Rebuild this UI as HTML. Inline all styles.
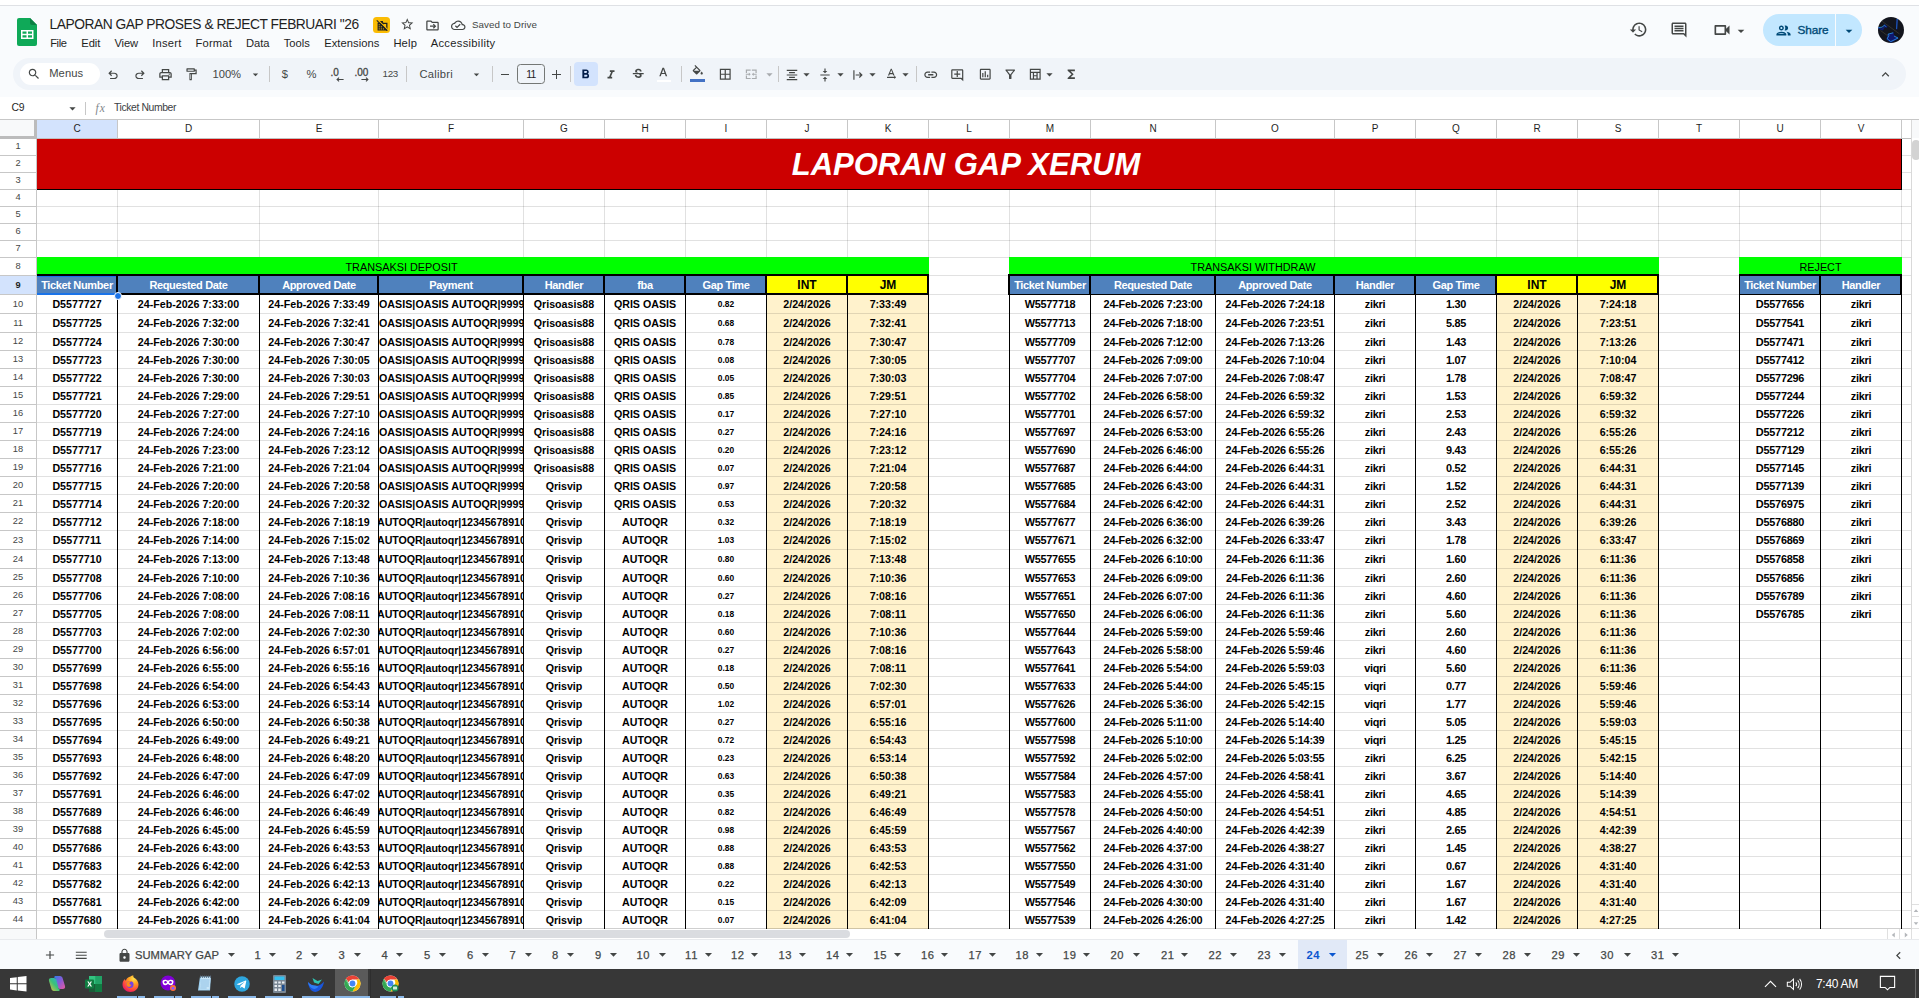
<!DOCTYPE html>
<html lang="id"><head><meta charset="utf-8"><title>LAPORAN GAP PROSES &amp; REJECT FEBRUARI "26 - Google Sheets</title>
<style>
*{box-sizing:border-box;margin:0;padding:0}
html,body{width:1919px;height:998px;overflow:hidden;background:#fff;font-family:"Liberation Sans",sans-serif}
body{position:relative}
i,b,s,u{position:absolute;display:block;font-style:normal;font-weight:normal;text-decoration:none}
#grid b{text-align:center;white-space:nowrap;overflow:hidden;color:#000}
#grid b.a{font-weight:bold;font-size:10.67px}
#grid b.k{font-weight:bold;font-size:10.9px;letter-spacing:-.25px}
#grid b.s{font-weight:bold;font-size:8.4px}
#grid b.p{font-weight:bold;font-size:10.67px;text-align:left;text-indent:0;letter-spacing:.04px}
#grid b.q{font-weight:bold;font-size:10.67px;text-align:left;text-indent:-2px;letter-spacing:-.06px}
#grid b.hd{font-weight:bold;font-size:11px;color:#fff;letter-spacing:-.35px}
#grid b.hy{font-weight:bold;font-size:12px}
#grid b.gb{font-size:10.85px}
#grid b.ttl{font-weight:bold;font-style:italic;font-size:31px;color:#fff}
#grid b.ch{font-size:10px;color:#1f1f1f;height:18px;line-height:18px}
#grid b.rn{left:0;width:36px;font-size:9.3px;color:#444746}
#grid b.rs{color:#1f1f1f;font-weight:bold}
.t{position:absolute;white-space:nowrap;color:#1f1f1f;transform-origin:0 50%}
svg{position:absolute;overflow:visible}
</style></head><body>
<div id="chrome">
<i style="left:0px;top:0px;width:1919px;height:5px;background:#fff;"></i>
<i style="left:0px;top:5px;width:1919px;height:1px;background:#dfe1e5;"></i>
<i style="left:0px;top:6px;width:1919px;height:91px;background:#f9fbfd;"></i>
<svg viewBox="0 0 20 28" style="left:17px;top:18px;width:20px;height:28px"><path d="M2 0h11l7 7v19a2 2 0 0 1-2 2H2a2 2 0 0 1-2-2V2a2 2 0 0 1 2-2z" fill="#0fa958"/><path d="M13 0l7 7h-5a2 2 0 0 1-2-2z" fill="#0b8043"/><path d="M4 12h12.500v9H4zm1.500 1.500v2.200h4v-2.200zm5.500 0v2.200h4v-2.200zm-5.500 3.700v2.300h4v-2.300zm5.500 0v2.300h4v-2.300z" fill="#fff" fill-rule="evenodd"/></svg>
<i style="left:373px;top:17px;width:17px;height:16px;background:#fbbc04;border-radius:3.5px"></i>
<svg viewBox="0 0 24 24" style="left:375.500px;top:18.800px;width:12.500px;height:12.500px"><path d="M3 7h5V4h5l1 3h8v15H3z" fill="#202124"/><path d="M13.500 9.500h6v10z" fill="#fbbc04"/><g fill="#fbbc04"><rect x="5.200" y="10" width="2" height="2"/><rect x="5.200" y="14" width="2" height="2"/><rect x="5.200" y="18" width="2" height="2"/><rect x="9.200" y="14" width="2" height="2"/><rect x="9.200" y="18" width="2" height="2"/><rect x="13.200" y="18" width="2" height="2"/><rect x="16.500" y="12" width="1.500" height="1.500"/></g><path d="M3.500 1.500l19.500 19.500" stroke="#fbbc04" stroke-width="2.200"/><path d="M1.500 2.500l20 20" stroke="#202124" stroke-width="2"/></svg>
<svg viewBox="0 0 24 24" style="left:400.1px;top:17.4px;width:14.5px;height:14.5px;fill:#444746;"><path d="M22 9.24l-7.19-.62L12 2 9.19 8.63 2 9.24l5.46 4.73L5.82 21 12 17.27 18.18 21l-1.63-7.03L22 9.24zM12 15.4l-3.76 2.27 1-4.28-3.32-2.88 4.38-.38L12 6.1l1.71 4.04 4.38.38-3.32 2.88 1 4.28L12 15.4z"/></svg>
<svg viewBox="0 0 24 24" style="left:425.0px;top:17.5px;width:15px;height:15px;fill:#444746;"><path d="M20 6h-8l-2-2H4c-1.100 0-2 .900-2 2v12c0 1.100.900 2 2 2h16c1.100 0 2-.900 2-2V8c0-1.100-.900-2-2-2zm0 12H4V6h5.170l2 2H20v10zM8 12h6.200l-1.600-1.600L14 9l4 4-4 4-1.400-1.400 1.600-1.600H8z"/></svg>
<svg viewBox="0 0 24 24" style="left:451.2px;top:17.8px;width:14.5px;height:14.5px;fill:#444746;"><path d="M19.35 10.04C18.67 6.59 15.64 4 12 4 9.11 4 6.6 5.64 5.35 8.04 2.34 8.36 0 10.91 0 14c0 3.31 2.69 6 6 6h13c2.76 0 5-2.24 5-5 0-2.64-2.05-4.78-4.65-4.96zM19 18H6c-2.21 0-4-1.79-4-4 0-2.05 1.53-3.76 3.56-3.97l1.07-.11.5-.95C8.08 7.14 9.94 6 12 6c2.62 0 4.88 1.86 5.39 4.43l.3 1.5 1.53.11c1.56.1 2.78 1.41 2.78 2.96 0 1.65-1.35 3-3 3zm-9-3.82l-2.09-2.09L6.5 13.5 10 17l6.01-6.01-1.41-1.41z"/></svg>
<svg viewBox="0 0 24 24" style="left:1628.5px;top:20.0px;width:19px;height:19px;fill:#444746;"><path d="M13 3c-4.97 0-9 4.03-9 9H1l3.89 3.89.07.14L9 12H6c0-3.87 3.13-7 7-7s7 3.13 7 7-3.13 7-7 7c-1.93 0-3.68-.79-4.94-2.06l-1.42 1.42C8.27 19.99 10.51 21 13 21c4.97 0 9-4.03 9-9s-4.03-9-9-9zm-1 5v5l4.28 2.54.72-1.21-3.5-2.08V8H12z"/></svg>
<svg viewBox="0 0 24 24" style="left:1669.5px;top:21.0px;width:18px;height:18px;fill:#444746;"><path d="M20 2H4c-1.1 0-2 .9-2 2v12c0 1.1.9 2 2 2h14l4 4V4c0-1.1-.9-2-2-2zm0 15.17L18.83 16H4V4h16v13.17zM6 6h12v2H6zm0 3h12v2H6zm0 3h12v2H6z"/></svg>
<svg viewBox="0 0 24 24" style="left:1712.0px;top:20.0px;width:20px;height:20px;fill:#444746;"><path d="M15 8v8H5V8h10m1-2H4c-.55 0-1 .45-1 1v10c0 .55.45 1 1 1h12c.55 0 1-.45 1-1v-3.5l4 4v-11l-4 4V7c0-.55-.45-1-1-1z"/></svg>
<svg viewBox="0 0 24 24" style="left:1733.0px;top:22.5px;width:16px;height:16px;fill:#444746;"><path d="M7 10l5 5 5-5z"/></svg>
<i style="left:1763px;top:14px;width:99px;height:32px;background:#c2e7ff;border-radius:16px"></i>
<i style="left:1835px;top:14px;width:1px;height:32px;background:#f9fbfd;"></i>
<svg viewBox="0 0 24 24" style="left:1775.0px;top:21.5px;width:17px;height:17px;fill:#004a77;"><path d="M9 13.75c-2.34 0-7 1.17-7 3.5V19h14v-1.75c0-2.33-4.66-3.5-7-3.5zM4.34 17c.84-.58 2.87-1.25 4.66-1.25s3.82.67 4.66 1.25H4.34zM9 12c1.93 0 3.5-1.57 3.5-3.5S10.930 5 9 5 5.5 6.570 5.500 8.500 7.070 12 9 12zm0-5c.83 0 1.5.67 1.500 1.500S9.830 10 9 10s-1.500-.67-1.500-1.500S8.170 7 9 7zm7.040 6.810c1.160.84 1.960 1.960 1.960 3.440V19h4v-1.750c0-2.020-3.500-3.170-5.960-3.440zM15 12c1.930 0 3.500-1.570 3.500-3.500S16.930 5 15 5c-.540 0-1.040.130-1.500.350.630.890 1 1.980 1 3.150s-.370 2.260-1 3.150c.460.220.960.350 1.500.350z"/></svg>
<svg viewBox="0 0 24 24" style="left:1840.7px;top:22.5px;width:16px;height:16px;fill:#004a77;"><path d="M7 10l5 5 5-5z"/></svg>
<svg viewBox="0 0 26 26" style="left:1878px;top:17px;width:26px;height:26px"><defs><clipPath id="av"><circle cx="13" cy="13" r="13"/></clipPath><filter id="bl" x="-50%" y="-50%" width="200%" height="200%"><feGaussianBlur stdDeviation=".7"/></filter></defs><g clip-path="url(#av)"><rect width="26" height="26" fill="#13151d"/><path d="M9.500 17.500l6-2.200 1 4 4.500 2-8 4.500-4.500-3z" fill="#0a1ab0" opacity=".55" filter="url(#bl)"/><path d="M0 11l4.500 1.500L7 8.500l2 2" fill="none" stroke="#0a22b8" stroke-width="1.800" opacity=".5" filter="url(#bl)"/><path d="M19.200 1.500l-.7 11" stroke="#0a2ac0" stroke-width="1.600" opacity=".5" filter="url(#bl)"/><path d="M4 4.200l17.600 12.800M2.500 13.500l7.500 5.500" stroke="#4a4638" stroke-width=".6"/><path d="M.2 10.600l3.800-.4 2.400-2 1.600 1.600" fill="none" stroke="#2f9bf0" stroke-width=".8"/><path d="M19.200 2l-.6 10" stroke="#2a7be0" stroke-width=".7"/><path d="M15.200 15.800l-5.200 1.400.8 1.400-1.600 3.200 3.600 2.800 7.200-3.600-4-2" fill="none" stroke="#2f9bf0" stroke-width=".8"/></g></svg>
<i style="left:13px;top:58px;width:1893px;height:32px;background:#f0f4f9;border-radius:16px"></i>
<i style="left:20px;top:63px;width:80px;height:22px;background:#fff;border-radius:11px"></i>
<svg viewBox="0 0 24 24" style="left:26.5px;top:67.0px;width:14px;height:14px;fill:#444746;"><path d="M15.5 14h-.79l-.28-.27C15.41 12.59 16 11.11 16 9.5 16 5.91 13.09 3 9.5 3S3 5.91 3 9.5 5.91 16 9.5 16c1.61 0 3.09-.59 4.23-1.57l.27.28v.79l5 4.99L20.49 19l-4.99-5zm-6 0C7.01 14 5 11.99 5 9.5S7.01 5 9.5 5 14 7.01 14 9.5 11.99 14 9.5 14z"/></svg>
<svg viewBox="0 0 24 24" style="left:106.0px;top:67.5px;width:14px;height:14px;fill:#444746;"><path d="M7 19v-2h7.100q1.575 0 2.738-1T18 13.500q0-1.500-1.162-2.500T14.100 10H7.800l2.600 2.600L9 14 4 9l5-5 1.400 1.400L7.800 8h6.300q2.425 0 4.163 1.575T20 13.500q0 2.350-1.737 3.925T14.100 19z"/></svg>
<svg viewBox="0 0 24 24" style="left:133.0px;top:67.5px;width:14px;height:14px;fill:#444746;"><path d="M9.900 19q-2.425 0-4.163-1.575T4 13.500q0-2.350 1.737-3.925T9.900 8h6.300l-2.600-2.600L15 4l5 5-5 5-1.400-1.400 2.600-2.600H9.900q-1.575 0-2.737 1T6 13.500Q6 15 7.163 16T9.900 17H17v2z"/></svg>
<svg viewBox="0 0 24 24" style="left:157.5px;top:67.0px;width:15px;height:15px;fill:#444746;"><path d="M19 8h-1V3H6v5H5c-1.66 0-3 1.34-3 3v6h4v4h12v-4h4v-6c0-1.66-1.34-3-3-3zM8 5h8v3H8V5zm8 12v2H8v-4h8v2zm2-2v-2H6v2H4v-4c0-.55.45-1 1-1h14c.55 0 1 .45 1 1v4h-2z M18 11.5m-1 0a1 1 0 1 0 2 0a1 1 0 1 0 -2 0"/></svg>
<svg viewBox="0 0 24 24" style="left:183.8px;top:67.2px;width:14.5px;height:14.5px;fill:#444746;"><path d="M18 4V3c0-.55-.45-1-1-1H5c-.55 0-1 .45-1 1v4c0 .55.45 1 1 1h12c.55 0 1-.45 1-1V6h1v4H9v11c0 .55.45 1 1 1h2c.55 0 1-.45 1-1v-9h8V4h-3zm-2 2H6V4h10v2zm-5 14h-1v-8h1v8z"/></svg>
<svg viewBox="0 0 24 24" style="left:248.5px;top:68.0px;width:13px;height:13px;fill:#444746;"><path d="M7 10l5 5 5-5z"/></svg>
<i style="left:269px;top:66px;width:1px;height:16px;background:#c7c7c7;"></i>
<svg viewBox="0 0 10 6" style="left:335.5px;top:76.500px;width:8px;height:5px;fill:none;stroke:#444746;stroke-width:1.300"><path d="M9.500 3H1.500M3.800 .6L1.300 3l2.500 2.400"/></svg>
<svg viewBox="0 0 10 6" style="left:361px;top:76.500px;width:8px;height:5px;fill:none;stroke:#444746;stroke-width:1.300"><path d="M.5 3h8M6.200 .6L8.700 3 6.200 5.400"/></svg>
<i style="left:406px;top:66px;width:1px;height:16px;background:#c7c7c7;"></i>
<svg viewBox="0 0 24 24" style="left:469.5px;top:68.0px;width:13px;height:13px;fill:#444746;"><path d="M7 10l5 5 5-5z"/></svg>
<i style="left:492px;top:66px;width:1px;height:16px;background:#c7c7c7;"></i>
<i style="left:500.5px;top:74px;width:8px;height:1px;background:#444746;"></i>
<i style="left:517px;top:64px;width:27.5px;height:20px;background:transparent;border:1px solid #747775;border-radius:3.500px"></i>
<i style="left:552px;top:74px;width:9px;height:1px;background:#444746;"></i>
<i style="left:556px;top:70px;width:1px;height:9px;background:#444746;"></i>
<i style="left:570px;top:66px;width:1px;height:16px;background:#c7c7c7;"></i>
<i style="left:573.5px;top:62px;width:24px;height:24px;background:#d3e3fd;border-radius:4px"></i>
<svg viewBox="0 0 24 24" style="left:577.8px;top:67.0px;width:15px;height:15px;fill:#041e49;"><path d="M15.6 10.79c.97-.67 1.65-1.77 1.65-2.79 0-2.26-1.75-4-4-4H7v14h7.04c2.09 0 3.71-1.7 3.71-3.79 0-1.52-.86-2.82-2.15-3.42zM10 6.5h3c.83 0 1.5.67 1.5 1.5s-.67 1.5-1.5 1.5h-3v-3zm3.5 9H10v-3h3.5c.83 0 1.5.67 1.5 1.5s-.67 1.5-1.5 1.5z"/></svg>
<svg viewBox="0 0 24 24" style="left:604.0px;top:67.5px;width:14px;height:14px;fill:#444746;"><path d="M10 4v3h2.21l-3.42 8H6v3h8v-3h-2.21l3.42-8H18V4z"/></svg>
<svg viewBox="0 0 24 24" style="left:630.8px;top:67.2px;width:14.5px;height:14.5px;fill:#444746;"><path d="M7.24 8.75c-.26-.48-.39-1.03-.39-1.67 0-.61.13-1.16.4-1.67.26-.5.63-.93 1.11-1.29.48-.35 1.05-.63 1.7-.83.66-.19 1.39-.29 2.18-.29.81 0 1.54.11 2.21.34.66.22 1.23.54 1.69.94.47.4.83.88 1.08 1.43.25.55.38 1.15.38 1.81h-3.01c0-.31-.05-.59-.15-.85-.09-.27-.24-.49-.44-.68-.2-.19-.45-.33-.75-.44-.3-.1-.66-.16-1.06-.16-.39 0-.74.04-1.03.13-.29.09-.53.21-.72.36-.19.16-.34.34-.44.55-.1.21-.15.43-.15.66 0 .48.25.88.74 1.21.38.25.77.48 1.41.7H7.39c-.05-.08-.11-.17-.15-.25zM21 12v-2H3v2h9.62c.18.07.4.14.55.2.37.17.66.34.87.51.21.17.35.36.43.57.07.2.11.43.11.69 0 .23-.05.45-.14.66-.09.2-.23.38-.42.53-.19.15-.42.26-.71.35-.29.08-.63.13-1.01.13-.43 0-.83-.04-1.18-.13s-.66-.23-.91-.42c-.25-.19-.45-.44-.59-.75-.14-.31-.25-.76-.25-1.21H6.4c0 .55.08 1.13.24 1.58.16.45.37.85.65 1.21.28.35.6.66.98.92.37.26.78.48 1.22.65.44.17.9.3 1.38.39.48.08.96.13 1.44.13.8 0 1.53-.09 2.18-.28s1.21-.45 1.67-.79c.46-.34.82-.77 1.07-1.27s.38-1.07.38-1.71c0-.6-.1-1.14-.31-1.61-.05-.11-.11-.23-.17-.33H21z"/></svg>
<svg viewBox="0 0 24 24" style="left:656.2px;top:65.8px;width:14.5px;height:14.5px;fill:#444746;"><path d="M5.490 17h2.420l1.270-3.580h5.650L16.090 17h2.420L13.250 3h-2.500L5.490 17zm4.420-5.610L12 5.480l2.090 5.910H9.910z"/></svg>
<i style="left:656.5px;top:79.5px;width:14px;height:2.5px;background:#fff;"></i>
<i style="left:681px;top:66px;width:1px;height:16px;background:#c7c7c7;"></i>
<svg viewBox="0 0 24 24" style="left:690.8px;top:64.8px;width:13.5px;height:13.5px;fill:#444746;"><path d="M16.56 8.94L7.62 0 6.21 1.41l2.38 2.38-5.15 5.15c-.59.59-.59 1.54 0 2.12l5.5 5.5c.29.29.68.44 1.06.44s.77-.15 1.06-.44l5.5-5.5c.59-.58.59-1.53 0-2.12zM5.21 10L10 5.21 14.79 10H5.21zM19 11.5s-2 2.17-2 3.5c0 1.1.9 2 2 2s2-.9 2-2c0-1.33-2-3.5-2-3.5z"/></svg>
<i style="left:690px;top:79px;width:15px;height:3px;background:#4472c4;"></i>
<svg viewBox="0 0 24 24" style="left:717.8px;top:67.2px;width:14.5px;height:14.5px;fill:#444746;"><path d="M3 3v18h18V3H3zm8 16H5v-6h6v6zm0-8H5V5h6v6zm8 8h-6v-6h6v6zm0-8h-6V5h6v6z"/></svg>
<svg viewBox="0 0 24 24" style="left:744.2px;top:67.2px;width:14.5px;height:14.5px;fill:#a8abae;"><path d="M5 10H3V4h8v2H5v4zm14 8h-6v2h8v-6h-2v4zM5 18v-4H3v6h8v-2H5zM21 4h-8v2h6v4h2V4zM8 13v2l3-3-3-3v2H3v2h5zm8-2V9l-3 3 3 3v-2h5v-2h-5z"/></svg>
<svg viewBox="0 0 24 24" style="left:761.5px;top:67.0px;width:15px;height:15px;fill:#a8abae;"><path d="M7 10l5 5 5-5z"/></svg>
<i style="left:778px;top:66px;width:1px;height:16px;background:#c7c7c7;"></i>
<svg viewBox="0 0 24 24" style="left:785.0px;top:67.5px;width:14px;height:14px;fill:#444746;"><path d="M7 15v2h10v-2H7zm-4 6h18v-2H3v2zm0-8h18v-2H3v2zm4-6v2h10V7H7zM3 3v2h18V3H3z"/></svg>
<svg viewBox="0 0 24 24" style="left:799.0px;top:67.0px;width:15px;height:15px;fill:#444746;"><path d="M7 10l5 5 5-5z"/></svg>
<svg viewBox="0 0 24 24" style="left:818.0px;top:67.5px;width:14px;height:14px;fill:#444746;"><path d="M8 19h3v4h2v-4h3l-4-4-4 4zm8-14h-3V1h-2v4H8l4 4 4-4zM4 11v2h16v-2H4z"/></svg>
<svg viewBox="0 0 24 24" style="left:832.5px;top:67.0px;width:15px;height:15px;fill:#444746;"><path d="M7 10l5 5 5-5z"/></svg>
<svg viewBox="0 0 24 24" style="left:850.5px;top:67.5px;width:14px;height:14px;fill:#444746;"><path d="M4 4h2v16H4zM8 11h8.200l-2.600-2.600L15 7l5 5-5 5-1.400-1.400 2.600-2.600H8z"/></svg>
<svg viewBox="0 0 24 24" style="left:865.0px;top:67.0px;width:15px;height:15px;fill:#444746;"><path d="M7 10l5 5 5-5z"/></svg>
<svg viewBox="0 0 24 24" style="left:884.2px;top:67.2px;width:14.5px;height:14.5px;fill:#444746;"><path d="M12.750 3h-1.500L6.500 14h2.100l.900-2.200h5l.900 2.200h2.100L12.750 3zm-2.620 7L12 4.980 13.870 10h-3.740zM20 17l-3-3v2H5v2h12v2l3-3z"/></svg>
<svg viewBox="0 0 24 24" style="left:898.0px;top:67.0px;width:15px;height:15px;fill:#444746;"><path d="M7 10l5 5 5-5z"/></svg>
<i style="left:916px;top:66px;width:1px;height:16px;background:#c7c7c7;"></i>
<svg viewBox="0 0 24 24" style="left:923.2px;top:66.8px;width:15.5px;height:15.5px;fill:#444746;"><path d="M3.9 12c0-1.71 1.39-3.1 3.1-3.1h4V7H7c-2.76 0-5 2.24-5 5s2.24 5 5 5h4v-1.9H7c-1.71 0-3.1-1.39-3.1-3.1zM8 13h8v-2H8v2zm9-6h-4v1.9h4c1.71 0 3.1 1.39 3.1 3.1s-1.39 3.1-3.1 3.1h-4V17h4c2.76 0 5-2.24 5-5s-2.24-5-5-5z"/></svg>
<svg viewBox="0 0 24 24" style="left:950.2px;top:67.8px;width:14.5px;height:14.5px;fill:#444746;"><path d="M22 4c0-1.1-.9-2-2-2H4c-1.1 0-2 .9-2 2v12c0 1.1.9 2 2 2h14l4 4V4zm-2 13.17L18.83 16H4V4h16v13.17zM13 5h-2v4H7v2h4v4h2v-4h4V9h-4z"/></svg>
<svg viewBox="0 0 24 24" style="left:977.8px;top:67.2px;width:14.5px;height:14.5px;fill:#444746;"><path d="M9 17H7v-7h2v7zm4 0h-2V7h2v10zm4 0h-2v-4h2v4zm2 2H5V5h14v14zm0-16H5c-1.1 0-2 .9-2 2v14c0 1.1.9 2 2 2h14c1.1 0 2-.9 2-2V5c0-1.1-.9-2-2-2z"/></svg>
<svg viewBox="0 0 24 24" style="left:1003.2px;top:67.2px;width:14.5px;height:14.5px;fill:#444746;"><path d="M7 6h10l-5.01 6.3L7 6zm-2.75-.39C6.27 8.2 10 13 10 13v6c0 .55.45 1 1 1h2c.55 0 1-.45 1-1v-6s3.72-4.8 5.74-7.39A.998.998 0 0 0 18.95 4H5.04c-.83 0-1.3.95-.79 1.61z"/></svg>
<svg viewBox="0 0 24 24" style="left:1027.8px;top:67.2px;width:14.5px;height:14.5px;fill:#444746;"><path d="M3 3v18h18V3H3zm16 2v3H5V5h14zM5 19v-9h3v9H5zm5 0v-3.500h4V19h-4zm0-5.500V10h4v3.500h-4zm6 5.500v-9h3v9h-3z"/></svg>
<svg viewBox="0 0 24 24" style="left:1041.5px;top:67.0px;width:15px;height:15px;fill:#444746;"><path d="M7 10l5 5 5-5z"/></svg>
<svg viewBox="0 0 24 24" style="left:1063.8px;top:67.2px;width:14.5px;height:14.5px;fill:#444746;"><path d="M18 4H6v2l6.5 6L6 18v2h12v-3h-7l5-5-5-5h7z"/></svg>
<svg viewBox="0 0 24 24" style="left:1877.5px;top:67.0px;width:15px;height:15px;fill:#444746;"><path d="M12 8l-6 6 1.41 1.41L12 10.83l4.59 4.58L18 14z"/></svg>
<i style="left:0px;top:97px;width:1919px;height:22px;background:#fff;"></i>
<svg viewBox="0 0 24 24" style="left:64.5px;top:100.5px;width:15px;height:15px;fill:#444746;"><path d="M7 10l5 5 5-5z"/></svg>
<i style="left:85px;top:102px;width:1px;height:13px;background:#c7c7c7;"></i>
<i style="left:0px;top:929px;width:1919px;height:11px;background:#fff;"></i>
<i style="left:0px;top:929px;width:36px;height:10px;background:#f8f9fa;"></i>
<i style="left:36px;top:929px;width:1px;height:10px;background:#c7c7c7;"></i>
<i style="left:0px;top:939px;width:1919px;height:1px;background:#e8eaed;"></i>
<i style="left:104px;top:930px;width:746px;height:8px;background:#dadce0;border-radius:4px"></i>
<i style="left:1887px;top:929px;width:1px;height:10px;background:#e0e0e0;"></i>
<i style="left:1899px;top:929px;width:1px;height:10px;background:#e0e0e0;"></i>
<i style="left:1911px;top:929px;width:1px;height:10px;background:#e0e0e0;"></i>
<svg viewBox="0 0 24 10" style="left:1888px;top:929.500px;width:24px;height:10px;fill:#b4b7bb"><path d="M6.800 2.600v4.800L3.800 5zM16.800 2.600v4.800l3-2.400z"/></svg>
<i style="left:1912px;top:139px;width:7px;height:790px;background:#fff;"></i>
<i style="left:1912px;top:140px;width:8px;height:19.5px;background:#d3d3d3;border-radius:4px"></i>
<i style="left:1911px;top:904px;width:8px;height:1px;background:#e0e0e0;"></i>
<i style="left:1911px;top:916px;width:8px;height:1px;background:#e0e0e0;"></i>
<i style="left:1911px;top:928px;width:8px;height:1px;background:#e0e0e0;"></i>
<svg viewBox="0 0 8 24" style="left:1911.500px;top:904.500px;width:8px;height:24px;fill:#b4b7bb"><path d="M1.700 7h4.600L4 4.200zM1.700 17.200h4.600L4 20z"/></svg>
<i style="left:0px;top:940px;width:1919px;height:29px;background:#f9fbfd;"></i>
<svg viewBox="0 0 24 24" style="left:42.5px;top:948.0px;width:14px;height:14px;fill:#444746;"><path d="M19 13h-6v6h-2v-6H5v-2h6V5h2v6h6v2z"/></svg>
<svg viewBox="0 0 24 24" style="left:74.2px;top:947.8px;width:14.5px;height:14.5px;fill:#444746;"><path d="M3 18h18v-2H3v2zm0-5h18v-2H3v2zm0-7v2h18V6H3z"/></svg>
<svg viewBox="0 0 24 24" style="left:117.2px;top:947.5px;width:15px;height:15px;fill:#444746;"><path d="M18 8h-1V6c0-2.76-2.24-5-5-5S7 3.24 7 6v2H6c-1.1 0-2 .9-2 2v10c0 1.1.9 2 2 2h12c1.1 0 2-.9 2-2V10c0-1.1-.9-2-2-2zm-6 9c-1.1 0-2-.9-2-2s.9-2 2-2 2 .9 2 2-.9 2-2 2zm3.1-9H8.9V6c0-1.71 1.39-3.1 3.1-3.1 1.71 0 3.1 1.39 3.1 3.1v2z"/></svg>
<svg viewBox="0 0 24 24" style="left:222.8px;top:946.0px;width:17px;height:17px;fill:#444746;"><path d="M7 10l5 5 5-5z"/></svg>
<svg viewBox="0 0 24 24" style="left:263.6px;top:946.0px;width:17px;height:17px;fill:#444746;"><path d="M7 10l5 5 5-5z"/></svg>
<svg viewBox="0 0 24 24" style="left:305.6px;top:946.0px;width:17px;height:17px;fill:#444746;"><path d="M7 10l5 5 5-5z"/></svg>
<svg viewBox="0 0 24 24" style="left:348.6px;top:946.0px;width:17px;height:17px;fill:#444746;"><path d="M7 10l5 5 5-5z"/></svg>
<svg viewBox="0 0 24 24" style="left:391.1px;top:946.0px;width:17px;height:17px;fill:#444746;"><path d="M7 10l5 5 5-5z"/></svg>
<svg viewBox="0 0 24 24" style="left:434.1px;top:946.0px;width:17px;height:17px;fill:#444746;"><path d="M7 10l5 5 5-5z"/></svg>
<svg viewBox="0 0 24 24" style="left:476.6px;top:946.0px;width:17px;height:17px;fill:#444746;"><path d="M7 10l5 5 5-5z"/></svg>
<svg viewBox="0 0 24 24" style="left:519.6px;top:946.0px;width:17px;height:17px;fill:#444746;"><path d="M7 10l5 5 5-5z"/></svg>
<svg viewBox="0 0 24 24" style="left:562.1px;top:946.0px;width:17px;height:17px;fill:#444746;"><path d="M7 10l5 5 5-5z"/></svg>
<svg viewBox="0 0 24 24" style="left:604.6px;top:946.0px;width:17px;height:17px;fill:#444746;"><path d="M7 10l5 5 5-5z"/></svg>
<i style="left:1297.5px;top:940px;width:49px;height:29px;background:#e1e9f7;"></i>
<svg viewBox="0 0 24 24" style="left:654.1px;top:946.0px;width:17px;height:17px;fill:#444746;"><path d="M7 10l5 5 5-5z"/></svg>
<svg viewBox="0 0 24 24" style="left:699.6px;top:946.0px;width:17px;height:17px;fill:#444746;"><path d="M7 10l5 5 5-5z"/></svg>
<svg viewBox="0 0 24 24" style="left:746.1px;top:946.0px;width:17px;height:17px;fill:#444746;"><path d="M7 10l5 5 5-5z"/></svg>
<svg viewBox="0 0 24 24" style="left:793.6px;top:946.0px;width:17px;height:17px;fill:#444746;"><path d="M7 10l5 5 5-5z"/></svg>
<svg viewBox="0 0 24 24" style="left:841.1px;top:946.0px;width:17px;height:17px;fill:#444746;"><path d="M7 10l5 5 5-5z"/></svg>
<svg viewBox="0 0 24 24" style="left:888.6px;top:946.0px;width:17px;height:17px;fill:#444746;"><path d="M7 10l5 5 5-5z"/></svg>
<svg viewBox="0 0 24 24" style="left:936.1px;top:946.0px;width:17px;height:17px;fill:#444746;"><path d="M7 10l5 5 5-5z"/></svg>
<svg viewBox="0 0 24 24" style="left:983.6px;top:946.0px;width:17px;height:17px;fill:#444746;"><path d="M7 10l5 5 5-5z"/></svg>
<svg viewBox="0 0 24 24" style="left:1031.1px;top:946.0px;width:17px;height:17px;fill:#444746;"><path d="M7 10l5 5 5-5z"/></svg>
<svg viewBox="0 0 24 24" style="left:1078.1px;top:946.0px;width:17px;height:17px;fill:#444746;"><path d="M7 10l5 5 5-5z"/></svg>
<svg viewBox="0 0 24 24" style="left:1128.1px;top:946.0px;width:17px;height:17px;fill:#444746;"><path d="M7 10l5 5 5-5z"/></svg>
<svg viewBox="0 0 24 24" style="left:1176.1px;top:946.0px;width:17px;height:17px;fill:#444746;"><path d="M7 10l5 5 5-5z"/></svg>
<svg viewBox="0 0 24 24" style="left:1225.1px;top:946.0px;width:17px;height:17px;fill:#444746;"><path d="M7 10l5 5 5-5z"/></svg>
<svg viewBox="0 0 24 24" style="left:1274.1px;top:946.0px;width:17px;height:17px;fill:#444746;"><path d="M7 10l5 5 5-5z"/></svg>
<svg viewBox="0 0 24 24" style="left:1324.1px;top:946.0px;width:17px;height:17px;fill:#0b57d0;"><path d="M7 10l5 5 5-5z"/></svg>
<svg viewBox="0 0 24 24" style="left:1372.1px;top:946.0px;width:17px;height:17px;fill:#444746;"><path d="M7 10l5 5 5-5z"/></svg>
<svg viewBox="0 0 24 24" style="left:1421.1px;top:946.0px;width:17px;height:17px;fill:#444746;"><path d="M7 10l5 5 5-5z"/></svg>
<svg viewBox="0 0 24 24" style="left:1470.1px;top:946.0px;width:17px;height:17px;fill:#444746;"><path d="M7 10l5 5 5-5z"/></svg>
<svg viewBox="0 0 24 24" style="left:1519.1px;top:946.0px;width:17px;height:17px;fill:#444746;"><path d="M7 10l5 5 5-5z"/></svg>
<svg viewBox="0 0 24 24" style="left:1568.1px;top:946.0px;width:17px;height:17px;fill:#444746;"><path d="M7 10l5 5 5-5z"/></svg>
<svg viewBox="0 0 24 24" style="left:1618.6px;top:946.0px;width:17px;height:17px;fill:#444746;"><path d="M7 10l5 5 5-5z"/></svg>
<svg viewBox="0 0 24 24" style="left:1666.6px;top:946.0px;width:17px;height:17px;fill:#444746;"><path d="M7 10l5 5 5-5z"/></svg>
<svg viewBox="0 0 24 24" style="left:1891.0px;top:948.0px;width:15px;height:15px;fill:#444746;"><path d="M15.41 7.41L14 6l-6 6 6 6 1.41-1.41L10.83 12z"/></svg>
<i style="left:0px;top:969px;width:1919px;height:29px;background:#373737;"></i>
<span class="t" style="left:49.5px;top:15.0px;font-size:13.8px;line-height:19px;color:#1f1f1f;letter-spacing:-0.47px;">LAPORAN GAP PROSES &amp; REJECT FEBRUARI &quot;26</span>
<span class="t" style="left:472px;top:17.5px;font-size:9.8px;line-height:14px;color:#444746;letter-spacing:0.05px;">Saved to Drive</span>
<span class="t" style="left:50.2px;top:35.3px;font-size:11.2px;line-height:16px;color:#1f1f1f;letter-spacing:-0.43px;">File</span>
<span class="t" style="left:81.2px;top:35.3px;font-size:11.2px;line-height:16px;color:#1f1f1f;letter-spacing:0.00px;">Edit</span>
<span class="t" style="left:114.5px;top:35.3px;font-size:11.2px;line-height:16px;color:#1f1f1f;letter-spacing:-0.14px;">View</span>
<span class="t" style="left:152.2px;top:35.3px;font-size:11.2px;line-height:16px;color:#1f1f1f;letter-spacing:0.22px;">Insert</span>
<span class="t" style="left:195.5px;top:35.3px;font-size:11.2px;line-height:16px;color:#1f1f1f;letter-spacing:0.18px;">Format</span>
<span class="t" style="left:246px;top:35.3px;font-size:11.2px;line-height:16px;color:#1f1f1f;letter-spacing:-0.04px;">Data</span>
<span class="t" style="left:283.7px;top:35.3px;font-size:11.2px;line-height:16px;color:#1f1f1f;letter-spacing:0.04px;">Tools</span>
<span class="t" style="left:324.2px;top:35.3px;font-size:11.2px;line-height:16px;color:#1f1f1f;letter-spacing:0.06px;">Extensions</span>
<span class="t" style="left:393.4px;top:35.3px;font-size:11.2px;line-height:16px;color:#1f1f1f;letter-spacing:0.15px;">Help</span>
<span class="t" style="left:430.7px;top:35.3px;font-size:11.2px;line-height:16px;color:#1f1f1f;letter-spacing:0.30px;">Accessibility</span>
<span class="t" style="left:1797.5px;top:21.5px;font-size:11.8px;line-height:17px;color:#004a77;letter-spacing:-0.10px;-webkit-text-stroke:.35px #004a77">Share</span>
<span class="t" style="left:49.2px;top:65.3px;font-size:11.2px;line-height:16px;color:#444746;letter-spacing:0.08px;">Menus</span>
<span class="t" style="left:212.5px;top:66.3px;font-size:11.2px;line-height:16px;color:#444746;letter-spacing:-0.03px;">100%</span>
<span class="t" style="left:281.7px;top:65.5px;font-size:11.2px;line-height:16px;color:#444746;">$</span>
<span class="t" style="left:306.5px;top:65.5px;font-size:11.2px;line-height:16px;color:#444746;">%</span>
<span class="t" style="left:330.5px;top:65.5px;font-size:10px;line-height:14px;color:#444746;-webkit-text-stroke:.3px #444746">.0</span>
<span class="t" style="left:354.5px;top:65.5px;font-size:10px;line-height:14px;color:#444746;-webkit-text-stroke:.3px #444746">.00</span>
<span class="t" style="left:382.5px;top:66.8px;font-size:9.8px;line-height:14px;color:#444746;letter-spacing:-0.29px;">123</span>
<span class="t" style="left:419.5px;top:65.8px;font-size:11.2px;line-height:16px;color:#444746;letter-spacing:0.25px;">Calibri</span>
<span class="t" style="left:526.3px;top:66.8px;font-size:10.4px;line-height:15px;color:#1f1f1f;letter-spacing:-0.90px;">11</span>
<span class="t" style="left:11.5px;top:100.0px;font-size:10.4px;line-height:15px;color:#1f1f1f;letter-spacing:-0.15px;">C9</span>
<span class="t" style="left:95.5px;top:100.0px;font-size:11.5px;line-height:16px;color:#80868b;letter-spacing:1.09px;font-style:italic;font-family:'Liberation Serif',serif">fx</span>
<span class="t" style="left:114px;top:99.5px;font-size:10.4px;line-height:15px;color:#3c4043;letter-spacing:-0.40px;">Ticket Number</span>
<span class="t" style="left:135px;top:947.0px;font-size:11.2px;line-height:16px;color:#444746;letter-spacing:0.04px;-webkit-text-stroke:.25px #444746">SUMMARY GAP</span>
<span class="t" style="left:254.5px;top:947.0px;font-size:11.2px;line-height:16px;color:#444746;-webkit-text-stroke:.25px #444746">1</span>
<span class="t" style="left:296px;top:947.0px;font-size:11.2px;line-height:16px;color:#444746;-webkit-text-stroke:.25px #444746">2</span>
<span class="t" style="left:338.5px;top:947.0px;font-size:11.2px;line-height:16px;color:#444746;-webkit-text-stroke:.25px #444746">3</span>
<span class="t" style="left:381.5px;top:947.0px;font-size:11.2px;line-height:16px;color:#444746;-webkit-text-stroke:.25px #444746">4</span>
<span class="t" style="left:424px;top:947.0px;font-size:11.2px;line-height:16px;color:#444746;-webkit-text-stroke:.25px #444746">5</span>
<span class="t" style="left:467px;top:947.0px;font-size:11.2px;line-height:16px;color:#444746;-webkit-text-stroke:.25px #444746">6</span>
<span class="t" style="left:509.5px;top:947.0px;font-size:11.2px;line-height:16px;color:#444746;-webkit-text-stroke:.25px #444746">7</span>
<span class="t" style="left:552px;top:947.0px;font-size:11.2px;line-height:16px;color:#444746;-webkit-text-stroke:.25px #444746">8</span>
<span class="t" style="left:595px;top:947.0px;font-size:11.2px;line-height:16px;color:#444746;-webkit-text-stroke:.25px #444746">9</span>
<span class="t" style="left:636.5px;top:947.0px;font-size:11.2px;line-height:16px;color:#444746;letter-spacing:0.52px;-webkit-text-stroke:.25px #444746">10</span>
<span class="t" style="left:685px;top:947.0px;font-size:11.2px;line-height:16px;color:#444746;letter-spacing:0.94px;-webkit-text-stroke:.25px #444746">11</span>
<span class="t" style="left:731px;top:947.0px;font-size:11.2px;line-height:16px;color:#444746;letter-spacing:0.52px;-webkit-text-stroke:.25px #444746">12</span>
<span class="t" style="left:778.5px;top:947.0px;font-size:11.2px;line-height:16px;color:#444746;letter-spacing:0.52px;-webkit-text-stroke:.25px #444746">13</span>
<span class="t" style="left:826px;top:947.0px;font-size:11.2px;line-height:16px;color:#444746;letter-spacing:0.52px;-webkit-text-stroke:.25px #444746">14</span>
<span class="t" style="left:873.5px;top:947.0px;font-size:11.2px;line-height:16px;color:#444746;letter-spacing:0.52px;-webkit-text-stroke:.25px #444746">15</span>
<span class="t" style="left:921px;top:947.0px;font-size:11.2px;line-height:16px;color:#444746;letter-spacing:0.52px;-webkit-text-stroke:.25px #444746">16</span>
<span class="t" style="left:968.5px;top:947.0px;font-size:11.2px;line-height:16px;color:#444746;letter-spacing:0.52px;-webkit-text-stroke:.25px #444746">17</span>
<span class="t" style="left:1015.5px;top:947.0px;font-size:11.2px;line-height:16px;color:#444746;letter-spacing:0.52px;-webkit-text-stroke:.25px #444746">18</span>
<span class="t" style="left:1063px;top:947.0px;font-size:11.2px;line-height:16px;color:#444746;letter-spacing:0.52px;-webkit-text-stroke:.25px #444746">19</span>
<span class="t" style="left:1110.5px;top:947.0px;font-size:11.2px;line-height:16px;color:#444746;letter-spacing:0.52px;-webkit-text-stroke:.25px #444746">20</span>
<span class="t" style="left:1161px;top:947.0px;font-size:11.2px;line-height:16px;color:#444746;letter-spacing:0.52px;-webkit-text-stroke:.25px #444746">21</span>
<span class="t" style="left:1208.5px;top:947.0px;font-size:11.2px;line-height:16px;color:#444746;letter-spacing:0.52px;-webkit-text-stroke:.25px #444746">22</span>
<span class="t" style="left:1257.5px;top:947.0px;font-size:11.2px;line-height:16px;color:#444746;letter-spacing:0.52px;-webkit-text-stroke:.25px #444746">23</span>
<span class="t" style="left:1306.5px;top:947.0px;font-size:11.2px;line-height:16px;color:#0b57d0;font-weight:bold;letter-spacing:0.52px;">24</span>
<span class="t" style="left:1355.5px;top:947.0px;font-size:11.2px;line-height:16px;color:#444746;letter-spacing:0.52px;-webkit-text-stroke:.25px #444746">25</span>
<span class="t" style="left:1404.5px;top:947.0px;font-size:11.2px;line-height:16px;color:#444746;letter-spacing:0.52px;-webkit-text-stroke:.25px #444746">26</span>
<span class="t" style="left:1453.5px;top:947.0px;font-size:11.2px;line-height:16px;color:#444746;letter-spacing:0.52px;-webkit-text-stroke:.25px #444746">27</span>
<span class="t" style="left:1502.5px;top:947.0px;font-size:11.2px;line-height:16px;color:#444746;letter-spacing:0.52px;-webkit-text-stroke:.25px #444746">28</span>
<span class="t" style="left:1551.5px;top:947.0px;font-size:11.2px;line-height:16px;color:#444746;letter-spacing:0.52px;-webkit-text-stroke:.25px #444746">29</span>
<span class="t" style="left:1600.5px;top:947.0px;font-size:11.2px;line-height:16px;color:#444746;letter-spacing:0.52px;-webkit-text-stroke:.25px #444746">30</span>
<span class="t" style="left:1651px;top:947.0px;font-size:11.2px;line-height:16px;color:#444746;letter-spacing:0.52px;-webkit-text-stroke:.25px #444746">31</span>
</div>
<div id="grid">
<i style="left:767px;top:295px;width:80px;height:634px;background:#fff2cc;"></i>
<i style="left:848px;top:295px;width:80px;height:634px;background:#fff2cc;"></i>
<i style="left:1497px;top:295px;width:80px;height:634px;background:#fff2cc;"></i>
<i style="left:1578px;top:295px;width:80px;height:634px;background:#fff2cc;"></i>
<i style="left:37px;top:155px;width:1875px;height:1px;background:rgba(0,0,0,.118);"></i>
<i style="left:37px;top:172px;width:1875px;height:1px;background:rgba(0,0,0,.118);"></i>
<i style="left:37px;top:189px;width:1875px;height:1px;background:rgba(0,0,0,.118);"></i>
<i style="left:37px;top:206px;width:1875px;height:1px;background:rgba(0,0,0,.118);"></i>
<i style="left:37px;top:223px;width:1875px;height:1px;background:rgba(0,0,0,.118);"></i>
<i style="left:37px;top:240px;width:1875px;height:1px;background:rgba(0,0,0,.118);"></i>
<i style="left:37px;top:257px;width:1875px;height:1px;background:rgba(0,0,0,.118);"></i>
<i style="left:37px;top:275px;width:1875px;height:1px;background:rgba(0,0,0,.118);"></i>
<i style="left:37px;top:294px;width:1875px;height:1px;background:rgba(0,0,0,.118);"></i>
<i style="left:37px;top:313px;width:1875px;height:1px;background:rgba(0,0,0,.118);"></i>
<i style="left:37px;top:332px;width:1875px;height:1px;background:rgba(0,0,0,.118);"></i>
<i style="left:37px;top:350px;width:1875px;height:1px;background:rgba(0,0,0,.118);"></i>
<i style="left:37px;top:368px;width:1875px;height:1px;background:rgba(0,0,0,.118);"></i>
<i style="left:37px;top:386px;width:1875px;height:1px;background:rgba(0,0,0,.118);"></i>
<i style="left:37px;top:404px;width:1875px;height:1px;background:rgba(0,0,0,.118);"></i>
<i style="left:37px;top:422px;width:1875px;height:1px;background:rgba(0,0,0,.118);"></i>
<i style="left:37px;top:440px;width:1875px;height:1px;background:rgba(0,0,0,.118);"></i>
<i style="left:37px;top:458px;width:1875px;height:1px;background:rgba(0,0,0,.118);"></i>
<i style="left:37px;top:476px;width:1875px;height:1px;background:rgba(0,0,0,.118);"></i>
<i style="left:37px;top:494px;width:1875px;height:1px;background:rgba(0,0,0,.118);"></i>
<i style="left:37px;top:512px;width:1875px;height:1px;background:rgba(0,0,0,.118);"></i>
<i style="left:37px;top:530px;width:1875px;height:1px;background:rgba(0,0,0,.118);"></i>
<i style="left:37px;top:549px;width:1875px;height:1px;background:rgba(0,0,0,.118);"></i>
<i style="left:37px;top:568px;width:1875px;height:1px;background:rgba(0,0,0,.118);"></i>
<i style="left:37px;top:586px;width:1875px;height:1px;background:rgba(0,0,0,.118);"></i>
<i style="left:37px;top:604px;width:1875px;height:1px;background:rgba(0,0,0,.118);"></i>
<i style="left:37px;top:622px;width:1875px;height:1px;background:rgba(0,0,0,.118);"></i>
<i style="left:37px;top:640px;width:1875px;height:1px;background:rgba(0,0,0,.118);"></i>
<i style="left:37px;top:658px;width:1875px;height:1px;background:rgba(0,0,0,.118);"></i>
<i style="left:37px;top:676px;width:1875px;height:1px;background:rgba(0,0,0,.118);"></i>
<i style="left:37px;top:694px;width:1875px;height:1px;background:rgba(0,0,0,.118);"></i>
<i style="left:37px;top:712px;width:1875px;height:1px;background:rgba(0,0,0,.118);"></i>
<i style="left:37px;top:730px;width:1875px;height:1px;background:rgba(0,0,0,.118);"></i>
<i style="left:37px;top:748px;width:1875px;height:1px;background:rgba(0,0,0,.118);"></i>
<i style="left:37px;top:766px;width:1875px;height:1px;background:rgba(0,0,0,.118);"></i>
<i style="left:37px;top:784px;width:1875px;height:1px;background:rgba(0,0,0,.118);"></i>
<i style="left:37px;top:802px;width:1875px;height:1px;background:rgba(0,0,0,.118);"></i>
<i style="left:37px;top:820px;width:1875px;height:1px;background:rgba(0,0,0,.118);"></i>
<i style="left:37px;top:838px;width:1875px;height:1px;background:rgba(0,0,0,.118);"></i>
<i style="left:37px;top:856px;width:1875px;height:1px;background:rgba(0,0,0,.118);"></i>
<i style="left:37px;top:874px;width:1875px;height:1px;background:rgba(0,0,0,.118);"></i>
<i style="left:37px;top:892px;width:1875px;height:1px;background:rgba(0,0,0,.118);"></i>
<i style="left:37px;top:910px;width:1875px;height:1px;background:rgba(0,0,0,.118);"></i>
<i style="left:37px;top:928px;width:1875px;height:1px;background:rgba(0,0,0,.118);"></i>
<i style="left:117px;top:139px;width:1px;height:790px;background:rgba(0,0,0,.118);"></i>
<i style="left:259px;top:139px;width:1px;height:790px;background:rgba(0,0,0,.118);"></i>
<i style="left:378px;top:139px;width:1px;height:790px;background:rgba(0,0,0,.118);"></i>
<i style="left:523px;top:139px;width:1px;height:790px;background:rgba(0,0,0,.118);"></i>
<i style="left:604px;top:139px;width:1px;height:790px;background:rgba(0,0,0,.118);"></i>
<i style="left:685px;top:139px;width:1px;height:790px;background:rgba(0,0,0,.118);"></i>
<i style="left:766px;top:139px;width:1px;height:790px;background:rgba(0,0,0,.118);"></i>
<i style="left:847px;top:139px;width:1px;height:790px;background:rgba(0,0,0,.118);"></i>
<i style="left:928px;top:139px;width:1px;height:790px;background:rgba(0,0,0,.118);"></i>
<i style="left:1009px;top:139px;width:1px;height:790px;background:rgba(0,0,0,.118);"></i>
<i style="left:1090px;top:139px;width:1px;height:790px;background:rgba(0,0,0,.118);"></i>
<i style="left:1215px;top:139px;width:1px;height:790px;background:rgba(0,0,0,.118);"></i>
<i style="left:1334px;top:139px;width:1px;height:790px;background:rgba(0,0,0,.118);"></i>
<i style="left:1415px;top:139px;width:1px;height:790px;background:rgba(0,0,0,.118);"></i>
<i style="left:1496px;top:139px;width:1px;height:790px;background:rgba(0,0,0,.118);"></i>
<i style="left:1577px;top:139px;width:1px;height:790px;background:rgba(0,0,0,.118);"></i>
<i style="left:1658px;top:139px;width:1px;height:790px;background:rgba(0,0,0,.118);"></i>
<i style="left:1739px;top:139px;width:1px;height:790px;background:rgba(0,0,0,.118);"></i>
<i style="left:1820px;top:139px;width:1px;height:790px;background:rgba(0,0,0,.118);"></i>
<i style="left:1901px;top:139px;width:1px;height:790px;background:rgba(0,0,0,.118);"></i>
<i style="left:1911px;top:139px;width:1px;height:790px;background:rgba(0,0,0,.118);"></i>
<i style="left:37px;top:928px;width:1875px;height:1px;background:rgba(0,0,0,.08);"></i>
<i style="left:37px;top:139px;width:1864px;height:50px;background:#cc0000;"></i>
<i style="left:37px;top:189px;width:1865px;height:1px;background:#000;"></i>
<i style="left:1901px;top:139px;width:1px;height:51px;background:#000;"></i>
<i style="left:37px;top:257px;width:892px;height:17px;background:#00ff00;"></i>
<i style="left:1009px;top:257px;width:650px;height:17px;background:#00ff00;"></i>
<i style="left:1739px;top:257px;width:163px;height:17px;background:#00ff00;"></i>
<i style="left:36px;top:274px;width:893px;height:2px;background:#000;"></i>
<i style="left:1008px;top:274px;width:651px;height:2px;background:#000;"></i>
<i style="left:1739px;top:274px;width:163px;height:2px;background:#000;"></i>
<i style="left:37px;top:276px;width:80px;height:18px;background:#4f81bd;"></i>
<i style="left:118px;top:276px;width:141px;height:18px;background:#4f81bd;"></i>
<i style="left:260px;top:276px;width:118px;height:18px;background:#4f81bd;"></i>
<i style="left:379px;top:276px;width:144px;height:18px;background:#4f81bd;"></i>
<i style="left:524px;top:276px;width:80px;height:18px;background:#4f81bd;"></i>
<i style="left:605px;top:276px;width:80px;height:18px;background:#4f81bd;"></i>
<i style="left:686px;top:276px;width:80px;height:18px;background:#4f81bd;"></i>
<i style="left:767px;top:276px;width:80px;height:18px;background:#ffff00;"></i>
<i style="left:848px;top:276px;width:80px;height:18px;background:#ffff00;"></i>
<i style="left:1010px;top:276px;width:80px;height:18px;background:#4f81bd;"></i>
<i style="left:1091px;top:276px;width:124px;height:18px;background:#4f81bd;"></i>
<i style="left:1216px;top:276px;width:118px;height:18px;background:#4f81bd;"></i>
<i style="left:1335px;top:276px;width:80px;height:18px;background:#4f81bd;"></i>
<i style="left:1416px;top:276px;width:80px;height:18px;background:#4f81bd;"></i>
<i style="left:1497px;top:276px;width:80px;height:18px;background:#ffff00;"></i>
<i style="left:1578px;top:276px;width:80px;height:18px;background:#ffff00;"></i>
<i style="left:1740px;top:276px;width:80px;height:18px;background:#4f81bd;"></i>
<i style="left:1821px;top:276px;width:80px;height:18px;background:#4f81bd;"></i>
<i style="left:36px;top:293px;width:893px;height:2px;background:#000;"></i>
<i style="left:1008px;top:294px;width:651px;height:1px;background:#000;"></i>
<i style="left:1496px;top:293px;width:163px;height:2px;background:#000;"></i>
<i style="left:1739px;top:294px;width:163px;height:1px;background:#000;"></i>
<i style="left:116px;top:276px;width:2px;height:18px;background:#000;"></i>
<i style="left:117px;top:295px;width:1px;height:634px;background:#000;"></i>
<i style="left:258px;top:276px;width:2px;height:18px;background:#000;"></i>
<i style="left:259px;top:295px;width:1px;height:634px;background:#000;"></i>
<i style="left:377px;top:276px;width:2px;height:18px;background:#000;"></i>
<i style="left:378px;top:295px;width:1px;height:634px;background:#000;"></i>
<i style="left:522px;top:276px;width:2px;height:18px;background:#000;"></i>
<i style="left:523px;top:295px;width:1px;height:634px;background:#000;"></i>
<i style="left:603px;top:276px;width:2px;height:18px;background:#000;"></i>
<i style="left:604px;top:295px;width:1px;height:634px;background:#000;"></i>
<i style="left:684px;top:276px;width:2px;height:18px;background:#000;"></i>
<i style="left:685px;top:295px;width:1px;height:634px;background:#000;"></i>
<i style="left:765px;top:276px;width:2px;height:18px;background:#000;"></i>
<i style="left:766px;top:295px;width:1px;height:634px;background:#000;"></i>
<i style="left:846px;top:276px;width:2px;height:18px;background:#000;"></i>
<i style="left:847px;top:295px;width:1px;height:634px;background:#000;"></i>
<i style="left:927px;top:276px;width:2px;height:18px;background:#000;"></i>
<i style="left:928px;top:295px;width:1px;height:634px;background:#000;"></i>
<i style="left:1008px;top:276px;width:2px;height:18px;background:#000;"></i>
<i style="left:1009px;top:295px;width:1px;height:634px;background:#000;"></i>
<i style="left:1089px;top:276px;width:2px;height:18px;background:#000;"></i>
<i style="left:1090px;top:295px;width:1px;height:634px;background:#000;"></i>
<i style="left:1214px;top:276px;width:2px;height:18px;background:#000;"></i>
<i style="left:1215px;top:295px;width:1px;height:634px;background:#000;"></i>
<i style="left:1333px;top:276px;width:2px;height:18px;background:#000;"></i>
<i style="left:1334px;top:295px;width:1px;height:634px;background:#000;"></i>
<i style="left:1414px;top:276px;width:2px;height:18px;background:#000;"></i>
<i style="left:1415px;top:295px;width:1px;height:634px;background:#000;"></i>
<i style="left:1495px;top:276px;width:2px;height:18px;background:#000;"></i>
<i style="left:1496px;top:295px;width:1px;height:634px;background:#000;"></i>
<i style="left:1576px;top:276px;width:2px;height:18px;background:#000;"></i>
<i style="left:1577px;top:295px;width:1px;height:634px;background:#000;"></i>
<i style="left:1657px;top:276px;width:2px;height:18px;background:#000;"></i>
<i style="left:1658px;top:295px;width:1px;height:634px;background:#000;"></i>
<i style="left:1739px;top:276px;width:1px;height:18px;background:#000;"></i>
<i style="left:1739px;top:295px;width:1px;height:634px;background:#000;"></i>
<i style="left:1819px;top:276px;width:2px;height:18px;background:#000;"></i>
<i style="left:1820px;top:295px;width:1px;height:634px;background:#000;"></i>
<i style="left:1900px;top:276px;width:2px;height:18px;background:#000;"></i>
<i style="left:1901px;top:295px;width:1px;height:634px;background:#000;"></i>
<i style="left:36px;top:276px;width:80px;height:19px;border:1px solid #1a73e8;border-bottom-width:2px;border-right:0;background:none"></i>
<i style="left:114px;top:292px;width:8px;height:8px;border-radius:50%;background:#1a73e8;border:1px solid #fff"></i>
<b class="ttl" style="left:37px;top:139px;width:1858px;height:50px;line-height:52px">LAPORAN GAP XERUM</b>
<b class="gb" style="left:37px;top:258px;width:729px;height:17px;line-height:19px">TRANSAKSI DEPOSIT</b>
<b class="gb" style="left:1010px;top:258px;width:486px;height:17px;line-height:19px">TRANSAKSI WITHDRAW</b>
<b class="gb" style="left:1740px;top:258px;width:161px;height:17px;line-height:19px">REJECT</b>
<b class="hd" style="left:37px;top:276px;width:80px;height:18px;line-height:18px">Ticket Number</b>
<b class="hd" style="left:118px;top:276px;width:141px;height:18px;line-height:18px">Requested Date</b>
<b class="hd" style="left:260px;top:276px;width:118px;height:18px;line-height:18px">Approved Date</b>
<b class="hd" style="left:379px;top:276px;width:144px;height:18px;line-height:18px">Payment</b>
<b class="hd" style="left:524px;top:276px;width:80px;height:18px;line-height:18px">Handler</b>
<b class="hd" style="left:605px;top:276px;width:80px;height:18px;line-height:18px">fba</b>
<b class="hd" style="left:686px;top:276px;width:80px;height:18px;line-height:18px">Gap Time</b>
<b class="hy" style="left:767px;top:276px;width:80px;height:18px;line-height:18px">INT</b>
<b class="hy" style="left:848px;top:276px;width:80px;height:18px;line-height:18px">JM</b>
<b class="hd" style="left:1010px;top:276px;width:80px;height:18px;line-height:18px">Ticket Number</b>
<b class="hd" style="left:1091px;top:276px;width:124px;height:18px;line-height:18px">Requested Date</b>
<b class="hd" style="left:1216px;top:276px;width:118px;height:18px;line-height:18px">Approved Date</b>
<b class="hd" style="left:1335px;top:276px;width:80px;height:18px;line-height:18px">Handler</b>
<b class="hd" style="left:1416px;top:276px;width:80px;height:18px;line-height:18px">Gap Time</b>
<b class="hy" style="left:1497px;top:276px;width:80px;height:18px;line-height:18px">INT</b>
<b class="hy" style="left:1578px;top:276px;width:80px;height:18px;line-height:18px">JM</b>
<b class="hd" style="left:1740px;top:276px;width:80px;height:18px;line-height:18px">Ticket Number</b>
<b class="hd" style="left:1821px;top:276px;width:80px;height:18px;line-height:18px">Handler</b>
<b class="a" style="left:37px;top:295px;width:80px;height:18px;line-height:18px">D5577727</b>
<b class="a" style="left:118px;top:295px;width:141px;height:18px;line-height:18px">24-Feb-2026 7:33:00</b>
<b class="a" style="left:260px;top:295px;width:118px;height:18px;line-height:18px">24-Feb-2026 7:33:49</b>
<b class="p" style="left:379px;top:295px;width:144px;height:18px;line-height:18px">OASIS|OASIS AUTOQR|99999</b>
<b class="a" style="left:524px;top:295px;width:80px;height:18px;line-height:18px">Qrisoasis88</b>
<b class="a" style="left:605px;top:295px;width:80px;height:18px;line-height:18px">QRIS OASIS</b>
<b class="s" style="left:686px;top:295px;width:80px;height:18px;line-height:18px">0.82</b>
<b class="a" style="left:767px;top:295px;width:80px;height:18px;line-height:18px">2/24/2026</b>
<b class="a" style="left:848px;top:295px;width:80px;height:18px;line-height:18px">7:33:49</b>
<b class="a" style="left:37px;top:314px;width:80px;height:18px;line-height:18px">D5577725</b>
<b class="a" style="left:118px;top:314px;width:141px;height:18px;line-height:18px">24-Feb-2026 7:32:00</b>
<b class="a" style="left:260px;top:314px;width:118px;height:18px;line-height:18px">24-Feb-2026 7:32:41</b>
<b class="p" style="left:379px;top:314px;width:144px;height:18px;line-height:18px">OASIS|OASIS AUTOQR|99999</b>
<b class="a" style="left:524px;top:314px;width:80px;height:18px;line-height:18px">Qrisoasis88</b>
<b class="a" style="left:605px;top:314px;width:80px;height:18px;line-height:18px">QRIS OASIS</b>
<b class="s" style="left:686px;top:314px;width:80px;height:18px;line-height:18px">0.68</b>
<b class="a" style="left:767px;top:314px;width:80px;height:18px;line-height:18px">2/24/2026</b>
<b class="a" style="left:848px;top:314px;width:80px;height:18px;line-height:18px">7:32:41</b>
<b class="a" style="left:37px;top:333px;width:80px;height:17px;line-height:18px">D5577724</b>
<b class="a" style="left:118px;top:333px;width:141px;height:17px;line-height:18px">24-Feb-2026 7:30:00</b>
<b class="a" style="left:260px;top:333px;width:118px;height:17px;line-height:18px">24-Feb-2026 7:30:47</b>
<b class="p" style="left:379px;top:333px;width:144px;height:17px;line-height:18px">OASIS|OASIS AUTOQR|99999</b>
<b class="a" style="left:524px;top:333px;width:80px;height:17px;line-height:18px">Qrisoasis88</b>
<b class="a" style="left:605px;top:333px;width:80px;height:17px;line-height:18px">QRIS OASIS</b>
<b class="s" style="left:686px;top:333px;width:80px;height:17px;line-height:18px">0.78</b>
<b class="a" style="left:767px;top:333px;width:80px;height:17px;line-height:18px">2/24/2026</b>
<b class="a" style="left:848px;top:333px;width:80px;height:17px;line-height:18px">7:30:47</b>
<b class="a" style="left:37px;top:351px;width:80px;height:17px;line-height:18px">D5577723</b>
<b class="a" style="left:118px;top:351px;width:141px;height:17px;line-height:18px">24-Feb-2026 7:30:00</b>
<b class="a" style="left:260px;top:351px;width:118px;height:17px;line-height:18px">24-Feb-2026 7:30:05</b>
<b class="p" style="left:379px;top:351px;width:144px;height:17px;line-height:18px">OASIS|OASIS AUTOQR|99999</b>
<b class="a" style="left:524px;top:351px;width:80px;height:17px;line-height:18px">Qrisoasis88</b>
<b class="a" style="left:605px;top:351px;width:80px;height:17px;line-height:18px">QRIS OASIS</b>
<b class="s" style="left:686px;top:351px;width:80px;height:17px;line-height:18px">0.08</b>
<b class="a" style="left:767px;top:351px;width:80px;height:17px;line-height:18px">2/24/2026</b>
<b class="a" style="left:848px;top:351px;width:80px;height:17px;line-height:18px">7:30:05</b>
<b class="a" style="left:37px;top:369px;width:80px;height:17px;line-height:18px">D5577722</b>
<b class="a" style="left:118px;top:369px;width:141px;height:17px;line-height:18px">24-Feb-2026 7:30:00</b>
<b class="a" style="left:260px;top:369px;width:118px;height:17px;line-height:18px">24-Feb-2026 7:30:03</b>
<b class="p" style="left:379px;top:369px;width:144px;height:17px;line-height:18px">OASIS|OASIS AUTOQR|99999</b>
<b class="a" style="left:524px;top:369px;width:80px;height:17px;line-height:18px">Qrisoasis88</b>
<b class="a" style="left:605px;top:369px;width:80px;height:17px;line-height:18px">QRIS OASIS</b>
<b class="s" style="left:686px;top:369px;width:80px;height:17px;line-height:18px">0.05</b>
<b class="a" style="left:767px;top:369px;width:80px;height:17px;line-height:18px">2/24/2026</b>
<b class="a" style="left:848px;top:369px;width:80px;height:17px;line-height:18px">7:30:03</b>
<b class="a" style="left:37px;top:387px;width:80px;height:17px;line-height:18px">D5577721</b>
<b class="a" style="left:118px;top:387px;width:141px;height:17px;line-height:18px">24-Feb-2026 7:29:00</b>
<b class="a" style="left:260px;top:387px;width:118px;height:17px;line-height:18px">24-Feb-2026 7:29:51</b>
<b class="p" style="left:379px;top:387px;width:144px;height:17px;line-height:18px">OASIS|OASIS AUTOQR|99999</b>
<b class="a" style="left:524px;top:387px;width:80px;height:17px;line-height:18px">Qrisoasis88</b>
<b class="a" style="left:605px;top:387px;width:80px;height:17px;line-height:18px">QRIS OASIS</b>
<b class="s" style="left:686px;top:387px;width:80px;height:17px;line-height:18px">0.85</b>
<b class="a" style="left:767px;top:387px;width:80px;height:17px;line-height:18px">2/24/2026</b>
<b class="a" style="left:848px;top:387px;width:80px;height:17px;line-height:18px">7:29:51</b>
<b class="a" style="left:37px;top:405px;width:80px;height:17px;line-height:18px">D5577720</b>
<b class="a" style="left:118px;top:405px;width:141px;height:17px;line-height:18px">24-Feb-2026 7:27:00</b>
<b class="a" style="left:260px;top:405px;width:118px;height:17px;line-height:18px">24-Feb-2026 7:27:10</b>
<b class="p" style="left:379px;top:405px;width:144px;height:17px;line-height:18px">OASIS|OASIS AUTOQR|99999</b>
<b class="a" style="left:524px;top:405px;width:80px;height:17px;line-height:18px">Qrisoasis88</b>
<b class="a" style="left:605px;top:405px;width:80px;height:17px;line-height:18px">QRIS OASIS</b>
<b class="s" style="left:686px;top:405px;width:80px;height:17px;line-height:18px">0.17</b>
<b class="a" style="left:767px;top:405px;width:80px;height:17px;line-height:18px">2/24/2026</b>
<b class="a" style="left:848px;top:405px;width:80px;height:17px;line-height:18px">7:27:10</b>
<b class="a" style="left:37px;top:423px;width:80px;height:17px;line-height:18px">D5577719</b>
<b class="a" style="left:118px;top:423px;width:141px;height:17px;line-height:18px">24-Feb-2026 7:24:00</b>
<b class="a" style="left:260px;top:423px;width:118px;height:17px;line-height:18px">24-Feb-2026 7:24:16</b>
<b class="p" style="left:379px;top:423px;width:144px;height:17px;line-height:18px">OASIS|OASIS AUTOQR|99999</b>
<b class="a" style="left:524px;top:423px;width:80px;height:17px;line-height:18px">Qrisoasis88</b>
<b class="a" style="left:605px;top:423px;width:80px;height:17px;line-height:18px">QRIS OASIS</b>
<b class="s" style="left:686px;top:423px;width:80px;height:17px;line-height:18px">0.27</b>
<b class="a" style="left:767px;top:423px;width:80px;height:17px;line-height:18px">2/24/2026</b>
<b class="a" style="left:848px;top:423px;width:80px;height:17px;line-height:18px">7:24:16</b>
<b class="a" style="left:37px;top:441px;width:80px;height:17px;line-height:18px">D5577717</b>
<b class="a" style="left:118px;top:441px;width:141px;height:17px;line-height:18px">24-Feb-2026 7:23:00</b>
<b class="a" style="left:260px;top:441px;width:118px;height:17px;line-height:18px">24-Feb-2026 7:23:12</b>
<b class="p" style="left:379px;top:441px;width:144px;height:17px;line-height:18px">OASIS|OASIS AUTOQR|99999</b>
<b class="a" style="left:524px;top:441px;width:80px;height:17px;line-height:18px">Qrisoasis88</b>
<b class="a" style="left:605px;top:441px;width:80px;height:17px;line-height:18px">QRIS OASIS</b>
<b class="s" style="left:686px;top:441px;width:80px;height:17px;line-height:18px">0.20</b>
<b class="a" style="left:767px;top:441px;width:80px;height:17px;line-height:18px">2/24/2026</b>
<b class="a" style="left:848px;top:441px;width:80px;height:17px;line-height:18px">7:23:12</b>
<b class="a" style="left:37px;top:459px;width:80px;height:17px;line-height:18px">D5577716</b>
<b class="a" style="left:118px;top:459px;width:141px;height:17px;line-height:18px">24-Feb-2026 7:21:00</b>
<b class="a" style="left:260px;top:459px;width:118px;height:17px;line-height:18px">24-Feb-2026 7:21:04</b>
<b class="p" style="left:379px;top:459px;width:144px;height:17px;line-height:18px">OASIS|OASIS AUTOQR|99999</b>
<b class="a" style="left:524px;top:459px;width:80px;height:17px;line-height:18px">Qrisoasis88</b>
<b class="a" style="left:605px;top:459px;width:80px;height:17px;line-height:18px">QRIS OASIS</b>
<b class="s" style="left:686px;top:459px;width:80px;height:17px;line-height:18px">0.07</b>
<b class="a" style="left:767px;top:459px;width:80px;height:17px;line-height:18px">2/24/2026</b>
<b class="a" style="left:848px;top:459px;width:80px;height:17px;line-height:18px">7:21:04</b>
<b class="a" style="left:37px;top:477px;width:80px;height:17px;line-height:18px">D5577715</b>
<b class="a" style="left:118px;top:477px;width:141px;height:17px;line-height:18px">24-Feb-2026 7:20:00</b>
<b class="a" style="left:260px;top:477px;width:118px;height:17px;line-height:18px">24-Feb-2026 7:20:58</b>
<b class="p" style="left:379px;top:477px;width:144px;height:17px;line-height:18px">OASIS|OASIS AUTOQR|99999</b>
<b class="a" style="left:524px;top:477px;width:80px;height:17px;line-height:18px">Qrisvip</b>
<b class="a" style="left:605px;top:477px;width:80px;height:17px;line-height:18px">QRIS OASIS</b>
<b class="s" style="left:686px;top:477px;width:80px;height:17px;line-height:18px">0.97</b>
<b class="a" style="left:767px;top:477px;width:80px;height:17px;line-height:18px">2/24/2026</b>
<b class="a" style="left:848px;top:477px;width:80px;height:17px;line-height:18px">7:20:58</b>
<b class="a" style="left:37px;top:495px;width:80px;height:17px;line-height:18px">D5577714</b>
<b class="a" style="left:118px;top:495px;width:141px;height:17px;line-height:18px">24-Feb-2026 7:20:00</b>
<b class="a" style="left:260px;top:495px;width:118px;height:17px;line-height:18px">24-Feb-2026 7:20:32</b>
<b class="p" style="left:379px;top:495px;width:144px;height:17px;line-height:18px">OASIS|OASIS AUTOQR|99999</b>
<b class="a" style="left:524px;top:495px;width:80px;height:17px;line-height:18px">Qrisvip</b>
<b class="a" style="left:605px;top:495px;width:80px;height:17px;line-height:18px">QRIS OASIS</b>
<b class="s" style="left:686px;top:495px;width:80px;height:17px;line-height:18px">0.53</b>
<b class="a" style="left:767px;top:495px;width:80px;height:17px;line-height:18px">2/24/2026</b>
<b class="a" style="left:848px;top:495px;width:80px;height:17px;line-height:18px">7:20:32</b>
<b class="a" style="left:37px;top:513px;width:80px;height:17px;line-height:18px">D5577712</b>
<b class="a" style="left:118px;top:513px;width:141px;height:17px;line-height:18px">24-Feb-2026 7:18:00</b>
<b class="a" style="left:260px;top:513px;width:118px;height:17px;line-height:18px">24-Feb-2026 7:18:19</b>
<b class="q" style="left:379px;top:513px;width:144px;height:17px;line-height:18px">AUTOQR|autoqr|12345678910</b>
<b class="a" style="left:524px;top:513px;width:80px;height:17px;line-height:18px">Qrisvip</b>
<b class="a" style="left:605px;top:513px;width:80px;height:17px;line-height:18px">AUTOQR</b>
<b class="s" style="left:686px;top:513px;width:80px;height:17px;line-height:18px">0.32</b>
<b class="a" style="left:767px;top:513px;width:80px;height:17px;line-height:18px">2/24/2026</b>
<b class="a" style="left:848px;top:513px;width:80px;height:17px;line-height:18px">7:18:19</b>
<b class="a" style="left:37px;top:531px;width:80px;height:18px;line-height:18px">D5577711</b>
<b class="a" style="left:118px;top:531px;width:141px;height:18px;line-height:18px">24-Feb-2026 7:14:00</b>
<b class="a" style="left:260px;top:531px;width:118px;height:18px;line-height:18px">24-Feb-2026 7:15:02</b>
<b class="q" style="left:379px;top:531px;width:144px;height:18px;line-height:18px">AUTOQR|autoqr|12345678910</b>
<b class="a" style="left:524px;top:531px;width:80px;height:18px;line-height:18px">Qrisvip</b>
<b class="a" style="left:605px;top:531px;width:80px;height:18px;line-height:18px">AUTOQR</b>
<b class="s" style="left:686px;top:531px;width:80px;height:18px;line-height:18px">1.03</b>
<b class="a" style="left:767px;top:531px;width:80px;height:18px;line-height:18px">2/24/2026</b>
<b class="a" style="left:848px;top:531px;width:80px;height:18px;line-height:18px">7:15:02</b>
<b class="a" style="left:37px;top:550px;width:80px;height:18px;line-height:18px">D5577710</b>
<b class="a" style="left:118px;top:550px;width:141px;height:18px;line-height:18px">24-Feb-2026 7:13:00</b>
<b class="a" style="left:260px;top:550px;width:118px;height:18px;line-height:18px">24-Feb-2026 7:13:48</b>
<b class="q" style="left:379px;top:550px;width:144px;height:18px;line-height:18px">AUTOQR|autoqr|12345678910</b>
<b class="a" style="left:524px;top:550px;width:80px;height:18px;line-height:18px">Qrisvip</b>
<b class="a" style="left:605px;top:550px;width:80px;height:18px;line-height:18px">AUTOQR</b>
<b class="s" style="left:686px;top:550px;width:80px;height:18px;line-height:18px">0.80</b>
<b class="a" style="left:767px;top:550px;width:80px;height:18px;line-height:18px">2/24/2026</b>
<b class="a" style="left:848px;top:550px;width:80px;height:18px;line-height:18px">7:13:48</b>
<b class="a" style="left:37px;top:569px;width:80px;height:17px;line-height:18px">D5577708</b>
<b class="a" style="left:118px;top:569px;width:141px;height:17px;line-height:18px">24-Feb-2026 7:10:00</b>
<b class="a" style="left:260px;top:569px;width:118px;height:17px;line-height:18px">24-Feb-2026 7:10:36</b>
<b class="q" style="left:379px;top:569px;width:144px;height:17px;line-height:18px">AUTOQR|autoqr|12345678910</b>
<b class="a" style="left:524px;top:569px;width:80px;height:17px;line-height:18px">Qrisvip</b>
<b class="a" style="left:605px;top:569px;width:80px;height:17px;line-height:18px">AUTOQR</b>
<b class="s" style="left:686px;top:569px;width:80px;height:17px;line-height:18px">0.60</b>
<b class="a" style="left:767px;top:569px;width:80px;height:17px;line-height:18px">2/24/2026</b>
<b class="a" style="left:848px;top:569px;width:80px;height:17px;line-height:18px">7:10:36</b>
<b class="a" style="left:37px;top:587px;width:80px;height:17px;line-height:18px">D5577706</b>
<b class="a" style="left:118px;top:587px;width:141px;height:17px;line-height:18px">24-Feb-2026 7:08:00</b>
<b class="a" style="left:260px;top:587px;width:118px;height:17px;line-height:18px">24-Feb-2026 7:08:16</b>
<b class="q" style="left:379px;top:587px;width:144px;height:17px;line-height:18px">AUTOQR|autoqr|12345678910</b>
<b class="a" style="left:524px;top:587px;width:80px;height:17px;line-height:18px">Qrisvip</b>
<b class="a" style="left:605px;top:587px;width:80px;height:17px;line-height:18px">AUTOQR</b>
<b class="s" style="left:686px;top:587px;width:80px;height:17px;line-height:18px">0.27</b>
<b class="a" style="left:767px;top:587px;width:80px;height:17px;line-height:18px">2/24/2026</b>
<b class="a" style="left:848px;top:587px;width:80px;height:17px;line-height:18px">7:08:16</b>
<b class="a" style="left:37px;top:605px;width:80px;height:17px;line-height:18px">D5577705</b>
<b class="a" style="left:118px;top:605px;width:141px;height:17px;line-height:18px">24-Feb-2026 7:08:00</b>
<b class="a" style="left:260px;top:605px;width:118px;height:17px;line-height:18px">24-Feb-2026 7:08:11</b>
<b class="q" style="left:379px;top:605px;width:144px;height:17px;line-height:18px">AUTOQR|autoqr|12345678910</b>
<b class="a" style="left:524px;top:605px;width:80px;height:17px;line-height:18px">Qrisvip</b>
<b class="a" style="left:605px;top:605px;width:80px;height:17px;line-height:18px">AUTOQR</b>
<b class="s" style="left:686px;top:605px;width:80px;height:17px;line-height:18px">0.18</b>
<b class="a" style="left:767px;top:605px;width:80px;height:17px;line-height:18px">2/24/2026</b>
<b class="a" style="left:848px;top:605px;width:80px;height:17px;line-height:18px">7:08:11</b>
<b class="a" style="left:37px;top:623px;width:80px;height:17px;line-height:18px">D5577703</b>
<b class="a" style="left:118px;top:623px;width:141px;height:17px;line-height:18px">24-Feb-2026 7:02:00</b>
<b class="a" style="left:260px;top:623px;width:118px;height:17px;line-height:18px">24-Feb-2026 7:02:30</b>
<b class="q" style="left:379px;top:623px;width:144px;height:17px;line-height:18px">AUTOQR|autoqr|12345678910</b>
<b class="a" style="left:524px;top:623px;width:80px;height:17px;line-height:18px">Qrisvip</b>
<b class="a" style="left:605px;top:623px;width:80px;height:17px;line-height:18px">AUTOQR</b>
<b class="s" style="left:686px;top:623px;width:80px;height:17px;line-height:18px">0.60</b>
<b class="a" style="left:767px;top:623px;width:80px;height:17px;line-height:18px">2/24/2026</b>
<b class="a" style="left:848px;top:623px;width:80px;height:17px;line-height:18px">7:10:36</b>
<b class="a" style="left:37px;top:641px;width:80px;height:17px;line-height:18px">D5577700</b>
<b class="a" style="left:118px;top:641px;width:141px;height:17px;line-height:18px">24-Feb-2026 6:56:00</b>
<b class="a" style="left:260px;top:641px;width:118px;height:17px;line-height:18px">24-Feb-2026 6:57:01</b>
<b class="q" style="left:379px;top:641px;width:144px;height:17px;line-height:18px">AUTOQR|autoqr|12345678910</b>
<b class="a" style="left:524px;top:641px;width:80px;height:17px;line-height:18px">Qrisvip</b>
<b class="a" style="left:605px;top:641px;width:80px;height:17px;line-height:18px">AUTOQR</b>
<b class="s" style="left:686px;top:641px;width:80px;height:17px;line-height:18px">0.27</b>
<b class="a" style="left:767px;top:641px;width:80px;height:17px;line-height:18px">2/24/2026</b>
<b class="a" style="left:848px;top:641px;width:80px;height:17px;line-height:18px">7:08:16</b>
<b class="a" style="left:37px;top:659px;width:80px;height:17px;line-height:18px">D5577699</b>
<b class="a" style="left:118px;top:659px;width:141px;height:17px;line-height:18px">24-Feb-2026 6:55:00</b>
<b class="a" style="left:260px;top:659px;width:118px;height:17px;line-height:18px">24-Feb-2026 6:55:16</b>
<b class="q" style="left:379px;top:659px;width:144px;height:17px;line-height:18px">AUTOQR|autoqr|12345678910</b>
<b class="a" style="left:524px;top:659px;width:80px;height:17px;line-height:18px">Qrisvip</b>
<b class="a" style="left:605px;top:659px;width:80px;height:17px;line-height:18px">AUTOQR</b>
<b class="s" style="left:686px;top:659px;width:80px;height:17px;line-height:18px">0.18</b>
<b class="a" style="left:767px;top:659px;width:80px;height:17px;line-height:18px">2/24/2026</b>
<b class="a" style="left:848px;top:659px;width:80px;height:17px;line-height:18px">7:08:11</b>
<b class="a" style="left:37px;top:677px;width:80px;height:17px;line-height:18px">D5577698</b>
<b class="a" style="left:118px;top:677px;width:141px;height:17px;line-height:18px">24-Feb-2026 6:54:00</b>
<b class="a" style="left:260px;top:677px;width:118px;height:17px;line-height:18px">24-Feb-2026 6:54:43</b>
<b class="q" style="left:379px;top:677px;width:144px;height:17px;line-height:18px">AUTOQR|autoqr|12345678910</b>
<b class="a" style="left:524px;top:677px;width:80px;height:17px;line-height:18px">Qrisvip</b>
<b class="a" style="left:605px;top:677px;width:80px;height:17px;line-height:18px">AUTOQR</b>
<b class="s" style="left:686px;top:677px;width:80px;height:17px;line-height:18px">0.50</b>
<b class="a" style="left:767px;top:677px;width:80px;height:17px;line-height:18px">2/24/2026</b>
<b class="a" style="left:848px;top:677px;width:80px;height:17px;line-height:18px">7:02:30</b>
<b class="a" style="left:37px;top:695px;width:80px;height:17px;line-height:18px">D5577696</b>
<b class="a" style="left:118px;top:695px;width:141px;height:17px;line-height:18px">24-Feb-2026 6:53:00</b>
<b class="a" style="left:260px;top:695px;width:118px;height:17px;line-height:18px">24-Feb-2026 6:53:14</b>
<b class="q" style="left:379px;top:695px;width:144px;height:17px;line-height:18px">AUTOQR|autoqr|12345678910</b>
<b class="a" style="left:524px;top:695px;width:80px;height:17px;line-height:18px">Qrisvip</b>
<b class="a" style="left:605px;top:695px;width:80px;height:17px;line-height:18px">AUTOQR</b>
<b class="s" style="left:686px;top:695px;width:80px;height:17px;line-height:18px">1.02</b>
<b class="a" style="left:767px;top:695px;width:80px;height:17px;line-height:18px">2/24/2026</b>
<b class="a" style="left:848px;top:695px;width:80px;height:17px;line-height:18px">6:57:01</b>
<b class="a" style="left:37px;top:713px;width:80px;height:17px;line-height:18px">D5577695</b>
<b class="a" style="left:118px;top:713px;width:141px;height:17px;line-height:18px">24-Feb-2026 6:50:00</b>
<b class="a" style="left:260px;top:713px;width:118px;height:17px;line-height:18px">24-Feb-2026 6:50:38</b>
<b class="q" style="left:379px;top:713px;width:144px;height:17px;line-height:18px">AUTOQR|autoqr|12345678910</b>
<b class="a" style="left:524px;top:713px;width:80px;height:17px;line-height:18px">Qrisvip</b>
<b class="a" style="left:605px;top:713px;width:80px;height:17px;line-height:18px">AUTOQR</b>
<b class="s" style="left:686px;top:713px;width:80px;height:17px;line-height:18px">0.27</b>
<b class="a" style="left:767px;top:713px;width:80px;height:17px;line-height:18px">2/24/2026</b>
<b class="a" style="left:848px;top:713px;width:80px;height:17px;line-height:18px">6:55:16</b>
<b class="a" style="left:37px;top:731px;width:80px;height:17px;line-height:18px">D5577694</b>
<b class="a" style="left:118px;top:731px;width:141px;height:17px;line-height:18px">24-Feb-2026 6:49:00</b>
<b class="a" style="left:260px;top:731px;width:118px;height:17px;line-height:18px">24-Feb-2026 6:49:21</b>
<b class="q" style="left:379px;top:731px;width:144px;height:17px;line-height:18px">AUTOQR|autoqr|12345678910</b>
<b class="a" style="left:524px;top:731px;width:80px;height:17px;line-height:18px">Qrisvip</b>
<b class="a" style="left:605px;top:731px;width:80px;height:17px;line-height:18px">AUTOQR</b>
<b class="s" style="left:686px;top:731px;width:80px;height:17px;line-height:18px">0.72</b>
<b class="a" style="left:767px;top:731px;width:80px;height:17px;line-height:18px">2/24/2026</b>
<b class="a" style="left:848px;top:731px;width:80px;height:17px;line-height:18px">6:54:43</b>
<b class="a" style="left:37px;top:749px;width:80px;height:17px;line-height:18px">D5577693</b>
<b class="a" style="left:118px;top:749px;width:141px;height:17px;line-height:18px">24-Feb-2026 6:48:00</b>
<b class="a" style="left:260px;top:749px;width:118px;height:17px;line-height:18px">24-Feb-2026 6:48:20</b>
<b class="q" style="left:379px;top:749px;width:144px;height:17px;line-height:18px">AUTOQR|autoqr|12345678910</b>
<b class="a" style="left:524px;top:749px;width:80px;height:17px;line-height:18px">Qrisvip</b>
<b class="a" style="left:605px;top:749px;width:80px;height:17px;line-height:18px">AUTOQR</b>
<b class="s" style="left:686px;top:749px;width:80px;height:17px;line-height:18px">0.23</b>
<b class="a" style="left:767px;top:749px;width:80px;height:17px;line-height:18px">2/24/2026</b>
<b class="a" style="left:848px;top:749px;width:80px;height:17px;line-height:18px">6:53:14</b>
<b class="a" style="left:37px;top:767px;width:80px;height:17px;line-height:18px">D5577692</b>
<b class="a" style="left:118px;top:767px;width:141px;height:17px;line-height:18px">24-Feb-2026 6:47:00</b>
<b class="a" style="left:260px;top:767px;width:118px;height:17px;line-height:18px">24-Feb-2026 6:47:09</b>
<b class="q" style="left:379px;top:767px;width:144px;height:17px;line-height:18px">AUTOQR|autoqr|12345678910</b>
<b class="a" style="left:524px;top:767px;width:80px;height:17px;line-height:18px">Qrisvip</b>
<b class="a" style="left:605px;top:767px;width:80px;height:17px;line-height:18px">AUTOQR</b>
<b class="s" style="left:686px;top:767px;width:80px;height:17px;line-height:18px">0.63</b>
<b class="a" style="left:767px;top:767px;width:80px;height:17px;line-height:18px">2/24/2026</b>
<b class="a" style="left:848px;top:767px;width:80px;height:17px;line-height:18px">6:50:38</b>
<b class="a" style="left:37px;top:785px;width:80px;height:17px;line-height:18px">D5577691</b>
<b class="a" style="left:118px;top:785px;width:141px;height:17px;line-height:18px">24-Feb-2026 6:46:00</b>
<b class="a" style="left:260px;top:785px;width:118px;height:17px;line-height:18px">24-Feb-2026 6:47:02</b>
<b class="q" style="left:379px;top:785px;width:144px;height:17px;line-height:18px">AUTOQR|autoqr|12345678910</b>
<b class="a" style="left:524px;top:785px;width:80px;height:17px;line-height:18px">Qrisvip</b>
<b class="a" style="left:605px;top:785px;width:80px;height:17px;line-height:18px">AUTOQR</b>
<b class="s" style="left:686px;top:785px;width:80px;height:17px;line-height:18px">0.35</b>
<b class="a" style="left:767px;top:785px;width:80px;height:17px;line-height:18px">2/24/2026</b>
<b class="a" style="left:848px;top:785px;width:80px;height:17px;line-height:18px">6:49:21</b>
<b class="a" style="left:37px;top:803px;width:80px;height:17px;line-height:18px">D5577689</b>
<b class="a" style="left:118px;top:803px;width:141px;height:17px;line-height:18px">24-Feb-2026 6:46:00</b>
<b class="a" style="left:260px;top:803px;width:118px;height:17px;line-height:18px">24-Feb-2026 6:46:49</b>
<b class="q" style="left:379px;top:803px;width:144px;height:17px;line-height:18px">AUTOQR|autoqr|12345678910</b>
<b class="a" style="left:524px;top:803px;width:80px;height:17px;line-height:18px">Qrisvip</b>
<b class="a" style="left:605px;top:803px;width:80px;height:17px;line-height:18px">AUTOQR</b>
<b class="s" style="left:686px;top:803px;width:80px;height:17px;line-height:18px">0.82</b>
<b class="a" style="left:767px;top:803px;width:80px;height:17px;line-height:18px">2/24/2026</b>
<b class="a" style="left:848px;top:803px;width:80px;height:17px;line-height:18px">6:46:49</b>
<b class="a" style="left:37px;top:821px;width:80px;height:17px;line-height:18px">D5577688</b>
<b class="a" style="left:118px;top:821px;width:141px;height:17px;line-height:18px">24-Feb-2026 6:45:00</b>
<b class="a" style="left:260px;top:821px;width:118px;height:17px;line-height:18px">24-Feb-2026 6:45:59</b>
<b class="q" style="left:379px;top:821px;width:144px;height:17px;line-height:18px">AUTOQR|autoqr|12345678910</b>
<b class="a" style="left:524px;top:821px;width:80px;height:17px;line-height:18px">Qrisvip</b>
<b class="a" style="left:605px;top:821px;width:80px;height:17px;line-height:18px">AUTOQR</b>
<b class="s" style="left:686px;top:821px;width:80px;height:17px;line-height:18px">0.98</b>
<b class="a" style="left:767px;top:821px;width:80px;height:17px;line-height:18px">2/24/2026</b>
<b class="a" style="left:848px;top:821px;width:80px;height:17px;line-height:18px">6:45:59</b>
<b class="a" style="left:37px;top:839px;width:80px;height:17px;line-height:18px">D5577686</b>
<b class="a" style="left:118px;top:839px;width:141px;height:17px;line-height:18px">24-Feb-2026 6:43:00</b>
<b class="a" style="left:260px;top:839px;width:118px;height:17px;line-height:18px">24-Feb-2026 6:43:53</b>
<b class="q" style="left:379px;top:839px;width:144px;height:17px;line-height:18px">AUTOQR|autoqr|12345678910</b>
<b class="a" style="left:524px;top:839px;width:80px;height:17px;line-height:18px">Qrisvip</b>
<b class="a" style="left:605px;top:839px;width:80px;height:17px;line-height:18px">AUTOQR</b>
<b class="s" style="left:686px;top:839px;width:80px;height:17px;line-height:18px">0.88</b>
<b class="a" style="left:767px;top:839px;width:80px;height:17px;line-height:18px">2/24/2026</b>
<b class="a" style="left:848px;top:839px;width:80px;height:17px;line-height:18px">6:43:53</b>
<b class="a" style="left:37px;top:857px;width:80px;height:17px;line-height:18px">D5577683</b>
<b class="a" style="left:118px;top:857px;width:141px;height:17px;line-height:18px">24-Feb-2026 6:42:00</b>
<b class="a" style="left:260px;top:857px;width:118px;height:17px;line-height:18px">24-Feb-2026 6:42:53</b>
<b class="q" style="left:379px;top:857px;width:144px;height:17px;line-height:18px">AUTOQR|autoqr|12345678910</b>
<b class="a" style="left:524px;top:857px;width:80px;height:17px;line-height:18px">Qrisvip</b>
<b class="a" style="left:605px;top:857px;width:80px;height:17px;line-height:18px">AUTOQR</b>
<b class="s" style="left:686px;top:857px;width:80px;height:17px;line-height:18px">0.88</b>
<b class="a" style="left:767px;top:857px;width:80px;height:17px;line-height:18px">2/24/2026</b>
<b class="a" style="left:848px;top:857px;width:80px;height:17px;line-height:18px">6:42:53</b>
<b class="a" style="left:37px;top:875px;width:80px;height:17px;line-height:18px">D5577682</b>
<b class="a" style="left:118px;top:875px;width:141px;height:17px;line-height:18px">24-Feb-2026 6:42:00</b>
<b class="a" style="left:260px;top:875px;width:118px;height:17px;line-height:18px">24-Feb-2026 6:42:13</b>
<b class="q" style="left:379px;top:875px;width:144px;height:17px;line-height:18px">AUTOQR|autoqr|12345678910</b>
<b class="a" style="left:524px;top:875px;width:80px;height:17px;line-height:18px">Qrisvip</b>
<b class="a" style="left:605px;top:875px;width:80px;height:17px;line-height:18px">AUTOQR</b>
<b class="s" style="left:686px;top:875px;width:80px;height:17px;line-height:18px">0.22</b>
<b class="a" style="left:767px;top:875px;width:80px;height:17px;line-height:18px">2/24/2026</b>
<b class="a" style="left:848px;top:875px;width:80px;height:17px;line-height:18px">6:42:13</b>
<b class="a" style="left:37px;top:893px;width:80px;height:17px;line-height:18px">D5577681</b>
<b class="a" style="left:118px;top:893px;width:141px;height:17px;line-height:18px">24-Feb-2026 6:42:00</b>
<b class="a" style="left:260px;top:893px;width:118px;height:17px;line-height:18px">24-Feb-2026 6:42:09</b>
<b class="q" style="left:379px;top:893px;width:144px;height:17px;line-height:18px">AUTOQR|autoqr|12345678910</b>
<b class="a" style="left:524px;top:893px;width:80px;height:17px;line-height:18px">Qrisvip</b>
<b class="a" style="left:605px;top:893px;width:80px;height:17px;line-height:18px">AUTOQR</b>
<b class="s" style="left:686px;top:893px;width:80px;height:17px;line-height:18px">0.15</b>
<b class="a" style="left:767px;top:893px;width:80px;height:17px;line-height:18px">2/24/2026</b>
<b class="a" style="left:848px;top:893px;width:80px;height:17px;line-height:18px">6:42:09</b>
<b class="a" style="left:37px;top:911px;width:80px;height:17px;line-height:18px">D5577680</b>
<b class="a" style="left:118px;top:911px;width:141px;height:17px;line-height:18px">24-Feb-2026 6:41:00</b>
<b class="a" style="left:260px;top:911px;width:118px;height:17px;line-height:18px">24-Feb-2026 6:41:04</b>
<b class="q" style="left:379px;top:911px;width:144px;height:17px;line-height:18px">AUTOQR|autoqr|12345678910</b>
<b class="a" style="left:524px;top:911px;width:80px;height:17px;line-height:18px">Qrisvip</b>
<b class="a" style="left:605px;top:911px;width:80px;height:17px;line-height:18px">AUTOQR</b>
<b class="s" style="left:686px;top:911px;width:80px;height:17px;line-height:18px">0.07</b>
<b class="a" style="left:767px;top:911px;width:80px;height:17px;line-height:18px">2/24/2026</b>
<b class="a" style="left:848px;top:911px;width:80px;height:17px;line-height:18px">6:41:04</b>
<b class="k" style="left:1010px;top:295px;width:80px;height:18px;line-height:18px">W5577718</b>
<b class="k" style="left:1091px;top:295px;width:124px;height:18px;line-height:18px">24-Feb-2026 7:23:00</b>
<b class="k" style="left:1216px;top:295px;width:118px;height:18px;line-height:18px">24-Feb-2026 7:24:18</b>
<b class="k" style="left:1335px;top:295px;width:80px;height:18px;line-height:18px">zikri</b>
<b class="k" style="left:1416px;top:295px;width:80px;height:18px;line-height:18px">1.30</b>
<b class="a" style="left:1497px;top:295px;width:80px;height:18px;line-height:18px">2/24/2026</b>
<b class="a" style="left:1578px;top:295px;width:80px;height:18px;line-height:18px">7:24:18</b>
<b class="k" style="left:1010px;top:314px;width:80px;height:18px;line-height:18px">W5577713</b>
<b class="k" style="left:1091px;top:314px;width:124px;height:18px;line-height:18px">24-Feb-2026 7:18:00</b>
<b class="k" style="left:1216px;top:314px;width:118px;height:18px;line-height:18px">24-Feb-2026 7:23:51</b>
<b class="k" style="left:1335px;top:314px;width:80px;height:18px;line-height:18px">zikri</b>
<b class="k" style="left:1416px;top:314px;width:80px;height:18px;line-height:18px">5.85</b>
<b class="a" style="left:1497px;top:314px;width:80px;height:18px;line-height:18px">2/24/2026</b>
<b class="a" style="left:1578px;top:314px;width:80px;height:18px;line-height:18px">7:23:51</b>
<b class="k" style="left:1010px;top:333px;width:80px;height:17px;line-height:18px">W5577709</b>
<b class="k" style="left:1091px;top:333px;width:124px;height:17px;line-height:18px">24-Feb-2026 7:12:00</b>
<b class="k" style="left:1216px;top:333px;width:118px;height:17px;line-height:18px">24-Feb-2026 7:13:26</b>
<b class="k" style="left:1335px;top:333px;width:80px;height:17px;line-height:18px">zikri</b>
<b class="k" style="left:1416px;top:333px;width:80px;height:17px;line-height:18px">1.43</b>
<b class="a" style="left:1497px;top:333px;width:80px;height:17px;line-height:18px">2/24/2026</b>
<b class="a" style="left:1578px;top:333px;width:80px;height:17px;line-height:18px">7:13:26</b>
<b class="k" style="left:1010px;top:351px;width:80px;height:17px;line-height:18px">W5577707</b>
<b class="k" style="left:1091px;top:351px;width:124px;height:17px;line-height:18px">24-Feb-2026 7:09:00</b>
<b class="k" style="left:1216px;top:351px;width:118px;height:17px;line-height:18px">24-Feb-2026 7:10:04</b>
<b class="k" style="left:1335px;top:351px;width:80px;height:17px;line-height:18px">zikri</b>
<b class="k" style="left:1416px;top:351px;width:80px;height:17px;line-height:18px">1.07</b>
<b class="a" style="left:1497px;top:351px;width:80px;height:17px;line-height:18px">2/24/2026</b>
<b class="a" style="left:1578px;top:351px;width:80px;height:17px;line-height:18px">7:10:04</b>
<b class="k" style="left:1010px;top:369px;width:80px;height:17px;line-height:18px">W5577704</b>
<b class="k" style="left:1091px;top:369px;width:124px;height:17px;line-height:18px">24-Feb-2026 7:07:00</b>
<b class="k" style="left:1216px;top:369px;width:118px;height:17px;line-height:18px">24-Feb-2026 7:08:47</b>
<b class="k" style="left:1335px;top:369px;width:80px;height:17px;line-height:18px">zikri</b>
<b class="k" style="left:1416px;top:369px;width:80px;height:17px;line-height:18px">1.78</b>
<b class="a" style="left:1497px;top:369px;width:80px;height:17px;line-height:18px">2/24/2026</b>
<b class="a" style="left:1578px;top:369px;width:80px;height:17px;line-height:18px">7:08:47</b>
<b class="k" style="left:1010px;top:387px;width:80px;height:17px;line-height:18px">W5577702</b>
<b class="k" style="left:1091px;top:387px;width:124px;height:17px;line-height:18px">24-Feb-2026 6:58:00</b>
<b class="k" style="left:1216px;top:387px;width:118px;height:17px;line-height:18px">24-Feb-2026 6:59:32</b>
<b class="k" style="left:1335px;top:387px;width:80px;height:17px;line-height:18px">zikri</b>
<b class="k" style="left:1416px;top:387px;width:80px;height:17px;line-height:18px">1.53</b>
<b class="a" style="left:1497px;top:387px;width:80px;height:17px;line-height:18px">2/24/2026</b>
<b class="a" style="left:1578px;top:387px;width:80px;height:17px;line-height:18px">6:59:32</b>
<b class="k" style="left:1010px;top:405px;width:80px;height:17px;line-height:18px">W5577701</b>
<b class="k" style="left:1091px;top:405px;width:124px;height:17px;line-height:18px">24-Feb-2026 6:57:00</b>
<b class="k" style="left:1216px;top:405px;width:118px;height:17px;line-height:18px">24-Feb-2026 6:59:32</b>
<b class="k" style="left:1335px;top:405px;width:80px;height:17px;line-height:18px">zikri</b>
<b class="k" style="left:1416px;top:405px;width:80px;height:17px;line-height:18px">2.53</b>
<b class="a" style="left:1497px;top:405px;width:80px;height:17px;line-height:18px">2/24/2026</b>
<b class="a" style="left:1578px;top:405px;width:80px;height:17px;line-height:18px">6:59:32</b>
<b class="k" style="left:1010px;top:423px;width:80px;height:17px;line-height:18px">W5577697</b>
<b class="k" style="left:1091px;top:423px;width:124px;height:17px;line-height:18px">24-Feb-2026 6:53:00</b>
<b class="k" style="left:1216px;top:423px;width:118px;height:17px;line-height:18px">24-Feb-2026 6:55:26</b>
<b class="k" style="left:1335px;top:423px;width:80px;height:17px;line-height:18px">zikri</b>
<b class="k" style="left:1416px;top:423px;width:80px;height:17px;line-height:18px">2.43</b>
<b class="a" style="left:1497px;top:423px;width:80px;height:17px;line-height:18px">2/24/2026</b>
<b class="a" style="left:1578px;top:423px;width:80px;height:17px;line-height:18px">6:55:26</b>
<b class="k" style="left:1010px;top:441px;width:80px;height:17px;line-height:18px">W5577690</b>
<b class="k" style="left:1091px;top:441px;width:124px;height:17px;line-height:18px">24-Feb-2026 6:46:00</b>
<b class="k" style="left:1216px;top:441px;width:118px;height:17px;line-height:18px">24-Feb-2026 6:55:26</b>
<b class="k" style="left:1335px;top:441px;width:80px;height:17px;line-height:18px">zikri</b>
<b class="k" style="left:1416px;top:441px;width:80px;height:17px;line-height:18px">9.43</b>
<b class="a" style="left:1497px;top:441px;width:80px;height:17px;line-height:18px">2/24/2026</b>
<b class="a" style="left:1578px;top:441px;width:80px;height:17px;line-height:18px">6:55:26</b>
<b class="k" style="left:1010px;top:459px;width:80px;height:17px;line-height:18px">W5577687</b>
<b class="k" style="left:1091px;top:459px;width:124px;height:17px;line-height:18px">24-Feb-2026 6:44:00</b>
<b class="k" style="left:1216px;top:459px;width:118px;height:17px;line-height:18px">24-Feb-2026 6:44:31</b>
<b class="k" style="left:1335px;top:459px;width:80px;height:17px;line-height:18px">zikri</b>
<b class="k" style="left:1416px;top:459px;width:80px;height:17px;line-height:18px">0.52</b>
<b class="a" style="left:1497px;top:459px;width:80px;height:17px;line-height:18px">2/24/2026</b>
<b class="a" style="left:1578px;top:459px;width:80px;height:17px;line-height:18px">6:44:31</b>
<b class="k" style="left:1010px;top:477px;width:80px;height:17px;line-height:18px">W5577685</b>
<b class="k" style="left:1091px;top:477px;width:124px;height:17px;line-height:18px">24-Feb-2026 6:43:00</b>
<b class="k" style="left:1216px;top:477px;width:118px;height:17px;line-height:18px">24-Feb-2026 6:44:31</b>
<b class="k" style="left:1335px;top:477px;width:80px;height:17px;line-height:18px">zikri</b>
<b class="k" style="left:1416px;top:477px;width:80px;height:17px;line-height:18px">1.52</b>
<b class="a" style="left:1497px;top:477px;width:80px;height:17px;line-height:18px">2/24/2026</b>
<b class="a" style="left:1578px;top:477px;width:80px;height:17px;line-height:18px">6:44:31</b>
<b class="k" style="left:1010px;top:495px;width:80px;height:17px;line-height:18px">W5577684</b>
<b class="k" style="left:1091px;top:495px;width:124px;height:17px;line-height:18px">24-Feb-2026 6:42:00</b>
<b class="k" style="left:1216px;top:495px;width:118px;height:17px;line-height:18px">24-Feb-2026 6:44:31</b>
<b class="k" style="left:1335px;top:495px;width:80px;height:17px;line-height:18px">zikri</b>
<b class="k" style="left:1416px;top:495px;width:80px;height:17px;line-height:18px">2.52</b>
<b class="a" style="left:1497px;top:495px;width:80px;height:17px;line-height:18px">2/24/2026</b>
<b class="a" style="left:1578px;top:495px;width:80px;height:17px;line-height:18px">6:44:31</b>
<b class="k" style="left:1010px;top:513px;width:80px;height:17px;line-height:18px">W5577677</b>
<b class="k" style="left:1091px;top:513px;width:124px;height:17px;line-height:18px">24-Feb-2026 6:36:00</b>
<b class="k" style="left:1216px;top:513px;width:118px;height:17px;line-height:18px">24-Feb-2026 6:39:26</b>
<b class="k" style="left:1335px;top:513px;width:80px;height:17px;line-height:18px">zikri</b>
<b class="k" style="left:1416px;top:513px;width:80px;height:17px;line-height:18px">3.43</b>
<b class="a" style="left:1497px;top:513px;width:80px;height:17px;line-height:18px">2/24/2026</b>
<b class="a" style="left:1578px;top:513px;width:80px;height:17px;line-height:18px">6:39:26</b>
<b class="k" style="left:1010px;top:531px;width:80px;height:18px;line-height:18px">W5577671</b>
<b class="k" style="left:1091px;top:531px;width:124px;height:18px;line-height:18px">24-Feb-2026 6:32:00</b>
<b class="k" style="left:1216px;top:531px;width:118px;height:18px;line-height:18px">24-Feb-2026 6:33:47</b>
<b class="k" style="left:1335px;top:531px;width:80px;height:18px;line-height:18px">zikri</b>
<b class="k" style="left:1416px;top:531px;width:80px;height:18px;line-height:18px">1.78</b>
<b class="a" style="left:1497px;top:531px;width:80px;height:18px;line-height:18px">2/24/2026</b>
<b class="a" style="left:1578px;top:531px;width:80px;height:18px;line-height:18px">6:33:47</b>
<b class="k" style="left:1010px;top:550px;width:80px;height:18px;line-height:18px">W5577655</b>
<b class="k" style="left:1091px;top:550px;width:124px;height:18px;line-height:18px">24-Feb-2026 6:10:00</b>
<b class="k" style="left:1216px;top:550px;width:118px;height:18px;line-height:18px">24-Feb-2026 6:11:36</b>
<b class="k" style="left:1335px;top:550px;width:80px;height:18px;line-height:18px">zikri</b>
<b class="k" style="left:1416px;top:550px;width:80px;height:18px;line-height:18px">1.60</b>
<b class="a" style="left:1497px;top:550px;width:80px;height:18px;line-height:18px">2/24/2026</b>
<b class="a" style="left:1578px;top:550px;width:80px;height:18px;line-height:18px">6:11:36</b>
<b class="k" style="left:1010px;top:569px;width:80px;height:17px;line-height:18px">W5577653</b>
<b class="k" style="left:1091px;top:569px;width:124px;height:17px;line-height:18px">24-Feb-2026 6:09:00</b>
<b class="k" style="left:1216px;top:569px;width:118px;height:17px;line-height:18px">24-Feb-2026 6:11:36</b>
<b class="k" style="left:1335px;top:569px;width:80px;height:17px;line-height:18px">zikri</b>
<b class="k" style="left:1416px;top:569px;width:80px;height:17px;line-height:18px">2.60</b>
<b class="a" style="left:1497px;top:569px;width:80px;height:17px;line-height:18px">2/24/2026</b>
<b class="a" style="left:1578px;top:569px;width:80px;height:17px;line-height:18px">6:11:36</b>
<b class="k" style="left:1010px;top:587px;width:80px;height:17px;line-height:18px">W5577651</b>
<b class="k" style="left:1091px;top:587px;width:124px;height:17px;line-height:18px">24-Feb-2026 6:07:00</b>
<b class="k" style="left:1216px;top:587px;width:118px;height:17px;line-height:18px">24-Feb-2026 6:11:36</b>
<b class="k" style="left:1335px;top:587px;width:80px;height:17px;line-height:18px">zikri</b>
<b class="k" style="left:1416px;top:587px;width:80px;height:17px;line-height:18px">4.60</b>
<b class="a" style="left:1497px;top:587px;width:80px;height:17px;line-height:18px">2/24/2026</b>
<b class="a" style="left:1578px;top:587px;width:80px;height:17px;line-height:18px">6:11:36</b>
<b class="k" style="left:1010px;top:605px;width:80px;height:17px;line-height:18px">W5577650</b>
<b class="k" style="left:1091px;top:605px;width:124px;height:17px;line-height:18px">24-Feb-2026 6:06:00</b>
<b class="k" style="left:1216px;top:605px;width:118px;height:17px;line-height:18px">24-Feb-2026 6:11:36</b>
<b class="k" style="left:1335px;top:605px;width:80px;height:17px;line-height:18px">zikri</b>
<b class="k" style="left:1416px;top:605px;width:80px;height:17px;line-height:18px">5.60</b>
<b class="a" style="left:1497px;top:605px;width:80px;height:17px;line-height:18px">2/24/2026</b>
<b class="a" style="left:1578px;top:605px;width:80px;height:17px;line-height:18px">6:11:36</b>
<b class="k" style="left:1010px;top:623px;width:80px;height:17px;line-height:18px">W5577644</b>
<b class="k" style="left:1091px;top:623px;width:124px;height:17px;line-height:18px">24-Feb-2026 5:59:00</b>
<b class="k" style="left:1216px;top:623px;width:118px;height:17px;line-height:18px">24-Feb-2026 5:59:46</b>
<b class="k" style="left:1335px;top:623px;width:80px;height:17px;line-height:18px">zikri</b>
<b class="k" style="left:1416px;top:623px;width:80px;height:17px;line-height:18px">2.60</b>
<b class="a" style="left:1497px;top:623px;width:80px;height:17px;line-height:18px">2/24/2026</b>
<b class="a" style="left:1578px;top:623px;width:80px;height:17px;line-height:18px">6:11:36</b>
<b class="k" style="left:1010px;top:641px;width:80px;height:17px;line-height:18px">W5577643</b>
<b class="k" style="left:1091px;top:641px;width:124px;height:17px;line-height:18px">24-Feb-2026 5:58:00</b>
<b class="k" style="left:1216px;top:641px;width:118px;height:17px;line-height:18px">24-Feb-2026 5:59:46</b>
<b class="k" style="left:1335px;top:641px;width:80px;height:17px;line-height:18px">zikri</b>
<b class="k" style="left:1416px;top:641px;width:80px;height:17px;line-height:18px">4.60</b>
<b class="a" style="left:1497px;top:641px;width:80px;height:17px;line-height:18px">2/24/2026</b>
<b class="a" style="left:1578px;top:641px;width:80px;height:17px;line-height:18px">6:11:36</b>
<b class="k" style="left:1010px;top:659px;width:80px;height:17px;line-height:18px">W5577641</b>
<b class="k" style="left:1091px;top:659px;width:124px;height:17px;line-height:18px">24-Feb-2026 5:54:00</b>
<b class="k" style="left:1216px;top:659px;width:118px;height:17px;line-height:18px">24-Feb-2026 5:59:03</b>
<b class="k" style="left:1335px;top:659px;width:80px;height:17px;line-height:18px">viqri</b>
<b class="k" style="left:1416px;top:659px;width:80px;height:17px;line-height:18px">5.60</b>
<b class="a" style="left:1497px;top:659px;width:80px;height:17px;line-height:18px">2/24/2026</b>
<b class="a" style="left:1578px;top:659px;width:80px;height:17px;line-height:18px">6:11:36</b>
<b class="k" style="left:1010px;top:677px;width:80px;height:17px;line-height:18px">W5577633</b>
<b class="k" style="left:1091px;top:677px;width:124px;height:17px;line-height:18px">24-Feb-2026 5:44:00</b>
<b class="k" style="left:1216px;top:677px;width:118px;height:17px;line-height:18px">24-Feb-2026 5:45:15</b>
<b class="k" style="left:1335px;top:677px;width:80px;height:17px;line-height:18px">viqri</b>
<b class="k" style="left:1416px;top:677px;width:80px;height:17px;line-height:18px">0.77</b>
<b class="a" style="left:1497px;top:677px;width:80px;height:17px;line-height:18px">2/24/2026</b>
<b class="a" style="left:1578px;top:677px;width:80px;height:17px;line-height:18px">5:59:46</b>
<b class="k" style="left:1010px;top:695px;width:80px;height:17px;line-height:18px">W5577626</b>
<b class="k" style="left:1091px;top:695px;width:124px;height:17px;line-height:18px">24-Feb-2026 5:36:00</b>
<b class="k" style="left:1216px;top:695px;width:118px;height:17px;line-height:18px">24-Feb-2026 5:42:15</b>
<b class="k" style="left:1335px;top:695px;width:80px;height:17px;line-height:18px">viqri</b>
<b class="k" style="left:1416px;top:695px;width:80px;height:17px;line-height:18px">1.77</b>
<b class="a" style="left:1497px;top:695px;width:80px;height:17px;line-height:18px">2/24/2026</b>
<b class="a" style="left:1578px;top:695px;width:80px;height:17px;line-height:18px">5:59:46</b>
<b class="k" style="left:1010px;top:713px;width:80px;height:17px;line-height:18px">W5577600</b>
<b class="k" style="left:1091px;top:713px;width:124px;height:17px;line-height:18px">24-Feb-2026 5:11:00</b>
<b class="k" style="left:1216px;top:713px;width:118px;height:17px;line-height:18px">24-Feb-2026 5:14:40</b>
<b class="k" style="left:1335px;top:713px;width:80px;height:17px;line-height:18px">viqri</b>
<b class="k" style="left:1416px;top:713px;width:80px;height:17px;line-height:18px">5.05</b>
<b class="a" style="left:1497px;top:713px;width:80px;height:17px;line-height:18px">2/24/2026</b>
<b class="a" style="left:1578px;top:713px;width:80px;height:17px;line-height:18px">5:59:03</b>
<b class="k" style="left:1010px;top:731px;width:80px;height:17px;line-height:18px">W5577598</b>
<b class="k" style="left:1091px;top:731px;width:124px;height:17px;line-height:18px">24-Feb-2026 5:10:00</b>
<b class="k" style="left:1216px;top:731px;width:118px;height:17px;line-height:18px">24-Feb-2026 5:14:39</b>
<b class="k" style="left:1335px;top:731px;width:80px;height:17px;line-height:18px">viqri</b>
<b class="k" style="left:1416px;top:731px;width:80px;height:17px;line-height:18px">1.25</b>
<b class="a" style="left:1497px;top:731px;width:80px;height:17px;line-height:18px">2/24/2026</b>
<b class="a" style="left:1578px;top:731px;width:80px;height:17px;line-height:18px">5:45:15</b>
<b class="k" style="left:1010px;top:749px;width:80px;height:17px;line-height:18px">W5577592</b>
<b class="k" style="left:1091px;top:749px;width:124px;height:17px;line-height:18px">24-Feb-2026 5:02:00</b>
<b class="k" style="left:1216px;top:749px;width:118px;height:17px;line-height:18px">24-Feb-2026 5:03:55</b>
<b class="k" style="left:1335px;top:749px;width:80px;height:17px;line-height:18px">zikri</b>
<b class="k" style="left:1416px;top:749px;width:80px;height:17px;line-height:18px">6.25</b>
<b class="a" style="left:1497px;top:749px;width:80px;height:17px;line-height:18px">2/24/2026</b>
<b class="a" style="left:1578px;top:749px;width:80px;height:17px;line-height:18px">5:42:15</b>
<b class="k" style="left:1010px;top:767px;width:80px;height:17px;line-height:18px">W5577584</b>
<b class="k" style="left:1091px;top:767px;width:124px;height:17px;line-height:18px">24-Feb-2026 4:57:00</b>
<b class="k" style="left:1216px;top:767px;width:118px;height:17px;line-height:18px">24-Feb-2026 4:58:41</b>
<b class="k" style="left:1335px;top:767px;width:80px;height:17px;line-height:18px">zikri</b>
<b class="k" style="left:1416px;top:767px;width:80px;height:17px;line-height:18px">3.67</b>
<b class="a" style="left:1497px;top:767px;width:80px;height:17px;line-height:18px">2/24/2026</b>
<b class="a" style="left:1578px;top:767px;width:80px;height:17px;line-height:18px">5:14:40</b>
<b class="k" style="left:1010px;top:785px;width:80px;height:17px;line-height:18px">W5577583</b>
<b class="k" style="left:1091px;top:785px;width:124px;height:17px;line-height:18px">24-Feb-2026 4:55:00</b>
<b class="k" style="left:1216px;top:785px;width:118px;height:17px;line-height:18px">24-Feb-2026 4:58:41</b>
<b class="k" style="left:1335px;top:785px;width:80px;height:17px;line-height:18px">zikri</b>
<b class="k" style="left:1416px;top:785px;width:80px;height:17px;line-height:18px">4.65</b>
<b class="a" style="left:1497px;top:785px;width:80px;height:17px;line-height:18px">2/24/2026</b>
<b class="a" style="left:1578px;top:785px;width:80px;height:17px;line-height:18px">5:14:39</b>
<b class="k" style="left:1010px;top:803px;width:80px;height:17px;line-height:18px">W5577578</b>
<b class="k" style="left:1091px;top:803px;width:124px;height:17px;line-height:18px">24-Feb-2026 4:50:00</b>
<b class="k" style="left:1216px;top:803px;width:118px;height:17px;line-height:18px">24-Feb-2026 4:54:51</b>
<b class="k" style="left:1335px;top:803px;width:80px;height:17px;line-height:18px">zikri</b>
<b class="k" style="left:1416px;top:803px;width:80px;height:17px;line-height:18px">4.85</b>
<b class="a" style="left:1497px;top:803px;width:80px;height:17px;line-height:18px">2/24/2026</b>
<b class="a" style="left:1578px;top:803px;width:80px;height:17px;line-height:18px">4:54:51</b>
<b class="k" style="left:1010px;top:821px;width:80px;height:17px;line-height:18px">W5577567</b>
<b class="k" style="left:1091px;top:821px;width:124px;height:17px;line-height:18px">24-Feb-2026 4:40:00</b>
<b class="k" style="left:1216px;top:821px;width:118px;height:17px;line-height:18px">24-Feb-2026 4:42:39</b>
<b class="k" style="left:1335px;top:821px;width:80px;height:17px;line-height:18px">zikri</b>
<b class="k" style="left:1416px;top:821px;width:80px;height:17px;line-height:18px">2.65</b>
<b class="a" style="left:1497px;top:821px;width:80px;height:17px;line-height:18px">2/24/2026</b>
<b class="a" style="left:1578px;top:821px;width:80px;height:17px;line-height:18px">4:42:39</b>
<b class="k" style="left:1010px;top:839px;width:80px;height:17px;line-height:18px">W5577562</b>
<b class="k" style="left:1091px;top:839px;width:124px;height:17px;line-height:18px">24-Feb-2026 4:37:00</b>
<b class="k" style="left:1216px;top:839px;width:118px;height:17px;line-height:18px">24-Feb-2026 4:38:27</b>
<b class="k" style="left:1335px;top:839px;width:80px;height:17px;line-height:18px">zikri</b>
<b class="k" style="left:1416px;top:839px;width:80px;height:17px;line-height:18px">1.45</b>
<b class="a" style="left:1497px;top:839px;width:80px;height:17px;line-height:18px">2/24/2026</b>
<b class="a" style="left:1578px;top:839px;width:80px;height:17px;line-height:18px">4:38:27</b>
<b class="k" style="left:1010px;top:857px;width:80px;height:17px;line-height:18px">W5577550</b>
<b class="k" style="left:1091px;top:857px;width:124px;height:17px;line-height:18px">24-Feb-2026 4:31:00</b>
<b class="k" style="left:1216px;top:857px;width:118px;height:17px;line-height:18px">24-Feb-2026 4:31:40</b>
<b class="k" style="left:1335px;top:857px;width:80px;height:17px;line-height:18px">zikri</b>
<b class="k" style="left:1416px;top:857px;width:80px;height:17px;line-height:18px">0.67</b>
<b class="a" style="left:1497px;top:857px;width:80px;height:17px;line-height:18px">2/24/2026</b>
<b class="a" style="left:1578px;top:857px;width:80px;height:17px;line-height:18px">4:31:40</b>
<b class="k" style="left:1010px;top:875px;width:80px;height:17px;line-height:18px">W5577549</b>
<b class="k" style="left:1091px;top:875px;width:124px;height:17px;line-height:18px">24-Feb-2026 4:30:00</b>
<b class="k" style="left:1216px;top:875px;width:118px;height:17px;line-height:18px">24-Feb-2026 4:31:40</b>
<b class="k" style="left:1335px;top:875px;width:80px;height:17px;line-height:18px">zikri</b>
<b class="k" style="left:1416px;top:875px;width:80px;height:17px;line-height:18px">1.67</b>
<b class="a" style="left:1497px;top:875px;width:80px;height:17px;line-height:18px">2/24/2026</b>
<b class="a" style="left:1578px;top:875px;width:80px;height:17px;line-height:18px">4:31:40</b>
<b class="k" style="left:1010px;top:893px;width:80px;height:17px;line-height:18px">W5577546</b>
<b class="k" style="left:1091px;top:893px;width:124px;height:17px;line-height:18px">24-Feb-2026 4:30:00</b>
<b class="k" style="left:1216px;top:893px;width:118px;height:17px;line-height:18px">24-Feb-2026 4:31:40</b>
<b class="k" style="left:1335px;top:893px;width:80px;height:17px;line-height:18px">zikri</b>
<b class="k" style="left:1416px;top:893px;width:80px;height:17px;line-height:18px">1.67</b>
<b class="a" style="left:1497px;top:893px;width:80px;height:17px;line-height:18px">2/24/2026</b>
<b class="a" style="left:1578px;top:893px;width:80px;height:17px;line-height:18px">4:31:40</b>
<b class="k" style="left:1010px;top:911px;width:80px;height:17px;line-height:18px">W5577539</b>
<b class="k" style="left:1091px;top:911px;width:124px;height:17px;line-height:18px">24-Feb-2026 4:26:00</b>
<b class="k" style="left:1216px;top:911px;width:118px;height:17px;line-height:18px">24-Feb-2026 4:27:25</b>
<b class="k" style="left:1335px;top:911px;width:80px;height:17px;line-height:18px">zikri</b>
<b class="k" style="left:1416px;top:911px;width:80px;height:17px;line-height:18px">1.42</b>
<b class="a" style="left:1497px;top:911px;width:80px;height:17px;line-height:18px">2/24/2026</b>
<b class="a" style="left:1578px;top:911px;width:80px;height:17px;line-height:18px">4:27:25</b>
<b class="k" style="left:1740px;top:295px;width:80px;height:18px;line-height:18px">D5577656</b>
<b class="k" style="left:1821px;top:295px;width:80px;height:18px;line-height:18px">zikri</b>
<b class="k" style="left:1740px;top:314px;width:80px;height:18px;line-height:18px">D5577541</b>
<b class="k" style="left:1821px;top:314px;width:80px;height:18px;line-height:18px">zikri</b>
<b class="k" style="left:1740px;top:333px;width:80px;height:17px;line-height:18px">D5577471</b>
<b class="k" style="left:1821px;top:333px;width:80px;height:17px;line-height:18px">zikri</b>
<b class="k" style="left:1740px;top:351px;width:80px;height:17px;line-height:18px">D5577412</b>
<b class="k" style="left:1821px;top:351px;width:80px;height:17px;line-height:18px">zikri</b>
<b class="k" style="left:1740px;top:369px;width:80px;height:17px;line-height:18px">D5577296</b>
<b class="k" style="left:1821px;top:369px;width:80px;height:17px;line-height:18px">zikri</b>
<b class="k" style="left:1740px;top:387px;width:80px;height:17px;line-height:18px">D5577244</b>
<b class="k" style="left:1821px;top:387px;width:80px;height:17px;line-height:18px">zikri</b>
<b class="k" style="left:1740px;top:405px;width:80px;height:17px;line-height:18px">D5577226</b>
<b class="k" style="left:1821px;top:405px;width:80px;height:17px;line-height:18px">zikri</b>
<b class="k" style="left:1740px;top:423px;width:80px;height:17px;line-height:18px">D5577212</b>
<b class="k" style="left:1821px;top:423px;width:80px;height:17px;line-height:18px">zikri</b>
<b class="k" style="left:1740px;top:441px;width:80px;height:17px;line-height:18px">D5577129</b>
<b class="k" style="left:1821px;top:441px;width:80px;height:17px;line-height:18px">zikri</b>
<b class="k" style="left:1740px;top:459px;width:80px;height:17px;line-height:18px">D5577145</b>
<b class="k" style="left:1821px;top:459px;width:80px;height:17px;line-height:18px">zikri</b>
<b class="k" style="left:1740px;top:477px;width:80px;height:17px;line-height:18px">D5577139</b>
<b class="k" style="left:1821px;top:477px;width:80px;height:17px;line-height:18px">zikri</b>
<b class="k" style="left:1740px;top:495px;width:80px;height:17px;line-height:18px">D5576975</b>
<b class="k" style="left:1821px;top:495px;width:80px;height:17px;line-height:18px">zikri</b>
<b class="k" style="left:1740px;top:513px;width:80px;height:17px;line-height:18px">D5576880</b>
<b class="k" style="left:1821px;top:513px;width:80px;height:17px;line-height:18px">zikri</b>
<b class="k" style="left:1740px;top:531px;width:80px;height:18px;line-height:18px">D5576869</b>
<b class="k" style="left:1821px;top:531px;width:80px;height:18px;line-height:18px">zikri</b>
<b class="k" style="left:1740px;top:550px;width:80px;height:18px;line-height:18px">D5576858</b>
<b class="k" style="left:1821px;top:550px;width:80px;height:18px;line-height:18px">zikri</b>
<b class="k" style="left:1740px;top:569px;width:80px;height:17px;line-height:18px">D5576856</b>
<b class="k" style="left:1821px;top:569px;width:80px;height:17px;line-height:18px">zikri</b>
<b class="k" style="left:1740px;top:587px;width:80px;height:17px;line-height:18px">D5576789</b>
<b class="k" style="left:1821px;top:587px;width:80px;height:17px;line-height:18px">zikri</b>
<b class="k" style="left:1740px;top:605px;width:80px;height:17px;line-height:18px">D5576785</b>
<b class="k" style="left:1821px;top:605px;width:80px;height:17px;line-height:18px">zikri</b>
<i style="left:0;top:119px;width:1919px;height:20px;background:#fff"></i>
<i style="left:0;top:119px;width:1911px;height:1px;background:#c7c7c7"></i>
<i style="left:0;top:138px;width:1911px;height:1px;background:#c0c0c0"></i>
<i style="left:37px;top:120px;width:80px;height:18px;background:#d3e3fd"></i>
<i style="left:0;top:120px;width:36px;height:18px;background:#f8f9fa"></i>
<i style="left:0;top:136px;width:37px;height:3px;background:#bcbcbc"></i>
<i style="left:34px;top:120px;width:3px;height:19px;background:#bcbcbc"></i>
<i style="left:117px;top:120px;width:1px;height:18px;background:#c7c7c7"></i>
<b class="ch" style="left:37px;top:120px;width:80px">C</b>
<i style="left:259px;top:120px;width:1px;height:18px;background:#c7c7c7"></i>
<b class="ch" style="left:118px;top:120px;width:141px">D</b>
<i style="left:378px;top:120px;width:1px;height:18px;background:#c7c7c7"></i>
<b class="ch" style="left:260px;top:120px;width:118px">E</b>
<i style="left:523px;top:120px;width:1px;height:18px;background:#c7c7c7"></i>
<b class="ch" style="left:379px;top:120px;width:144px">F</b>
<i style="left:604px;top:120px;width:1px;height:18px;background:#c7c7c7"></i>
<b class="ch" style="left:524px;top:120px;width:80px">G</b>
<i style="left:685px;top:120px;width:1px;height:18px;background:#c7c7c7"></i>
<b class="ch" style="left:605px;top:120px;width:80px">H</b>
<i style="left:766px;top:120px;width:1px;height:18px;background:#c7c7c7"></i>
<b class="ch" style="left:686px;top:120px;width:80px">I</b>
<i style="left:847px;top:120px;width:1px;height:18px;background:#c7c7c7"></i>
<b class="ch" style="left:767px;top:120px;width:80px">J</b>
<i style="left:928px;top:120px;width:1px;height:18px;background:#c7c7c7"></i>
<b class="ch" style="left:848px;top:120px;width:80px">K</b>
<i style="left:1009px;top:120px;width:1px;height:18px;background:#c7c7c7"></i>
<b class="ch" style="left:929px;top:120px;width:80px">L</b>
<i style="left:1090px;top:120px;width:1px;height:18px;background:#c7c7c7"></i>
<b class="ch" style="left:1010px;top:120px;width:80px">M</b>
<i style="left:1215px;top:120px;width:1px;height:18px;background:#c7c7c7"></i>
<b class="ch" style="left:1091px;top:120px;width:124px">N</b>
<i style="left:1334px;top:120px;width:1px;height:18px;background:#c7c7c7"></i>
<b class="ch" style="left:1216px;top:120px;width:118px">O</b>
<i style="left:1415px;top:120px;width:1px;height:18px;background:#c7c7c7"></i>
<b class="ch" style="left:1335px;top:120px;width:80px">P</b>
<i style="left:1496px;top:120px;width:1px;height:18px;background:#c7c7c7"></i>
<b class="ch" style="left:1416px;top:120px;width:80px">Q</b>
<i style="left:1577px;top:120px;width:1px;height:18px;background:#c7c7c7"></i>
<b class="ch" style="left:1497px;top:120px;width:80px">R</b>
<i style="left:1658px;top:120px;width:1px;height:18px;background:#c7c7c7"></i>
<b class="ch" style="left:1578px;top:120px;width:80px">S</b>
<i style="left:1739px;top:120px;width:1px;height:18px;background:#c7c7c7"></i>
<b class="ch" style="left:1659px;top:120px;width:80px">T</b>
<i style="left:1820px;top:120px;width:1px;height:18px;background:#c7c7c7"></i>
<b class="ch" style="left:1740px;top:120px;width:80px">U</b>
<i style="left:1901px;top:120px;width:1px;height:18px;background:#c7c7c7"></i>
<b class="ch" style="left:1821px;top:120px;width:80px">V</b>
<i style="left:1911px;top:119px;width:1px;height:811px;background:#d9d9d9"></i>
<i style="left:1912px;top:120px;width:7px;height:18px;background:#f8f9fa"></i>
<i style="left:1911px;top:119px;width:8px;height:1px;background:#c7c7c7"></i>
<i style="left:0;top:139px;width:36px;height:790px;background:#fff"></i>
<i style="left:36px;top:139px;width:1px;height:790px;background:#c7c7c7"></i>
<i style="left:0;top:276px;width:36px;height:18px;background:#d3e3fd"></i>
<i style="left:0;top:155px;width:36px;height:1px;background:#c7c7c7"></i>
<b class="rn" style="top:138px;height:16px;line-height:16px">1</b>
<i style="left:0;top:172px;width:36px;height:1px;background:#c7c7c7"></i>
<b class="rn" style="top:155px;height:16px;line-height:16px">2</b>
<i style="left:0;top:189px;width:36px;height:1px;background:#c7c7c7"></i>
<b class="rn" style="top:172px;height:16px;line-height:16px">3</b>
<i style="left:0;top:206px;width:36px;height:1px;background:#c7c7c7"></i>
<b class="rn" style="top:189px;height:16px;line-height:16px">4</b>
<i style="left:0;top:223px;width:36px;height:1px;background:#c7c7c7"></i>
<b class="rn" style="top:206px;height:16px;line-height:16px">5</b>
<i style="left:0;top:240px;width:36px;height:1px;background:#c7c7c7"></i>
<b class="rn" style="top:223px;height:16px;line-height:16px">6</b>
<i style="left:0;top:257px;width:36px;height:1px;background:#c7c7c7"></i>
<b class="rn" style="top:240px;height:16px;line-height:16px">7</b>
<i style="left:0;top:275px;width:36px;height:1px;background:#c7c7c7"></i>
<b class="rn" style="top:258px;height:17px;line-height:17px">8</b>
<i style="left:0;top:294px;width:36px;height:1px;background:#c7c7c7"></i>
<b class="rn rs" style="top:276px;height:18px;line-height:18px">9</b>
<i style="left:0;top:313px;width:36px;height:1px;background:#c7c7c7"></i>
<b class="rn" style="top:295px;height:18px;line-height:18px">10</b>
<i style="left:0;top:332px;width:36px;height:1px;background:#c7c7c7"></i>
<b class="rn" style="top:314px;height:18px;line-height:18px">11</b>
<i style="left:0;top:350px;width:36px;height:1px;background:#c7c7c7"></i>
<b class="rn" style="top:333px;height:17px;line-height:17px">12</b>
<i style="left:0;top:368px;width:36px;height:1px;background:#c7c7c7"></i>
<b class="rn" style="top:351px;height:17px;line-height:17px">13</b>
<i style="left:0;top:386px;width:36px;height:1px;background:#c7c7c7"></i>
<b class="rn" style="top:369px;height:17px;line-height:17px">14</b>
<i style="left:0;top:404px;width:36px;height:1px;background:#c7c7c7"></i>
<b class="rn" style="top:387px;height:17px;line-height:17px">15</b>
<i style="left:0;top:422px;width:36px;height:1px;background:#c7c7c7"></i>
<b class="rn" style="top:405px;height:17px;line-height:17px">16</b>
<i style="left:0;top:440px;width:36px;height:1px;background:#c7c7c7"></i>
<b class="rn" style="top:423px;height:17px;line-height:17px">17</b>
<i style="left:0;top:458px;width:36px;height:1px;background:#c7c7c7"></i>
<b class="rn" style="top:441px;height:17px;line-height:17px">18</b>
<i style="left:0;top:476px;width:36px;height:1px;background:#c7c7c7"></i>
<b class="rn" style="top:459px;height:17px;line-height:17px">19</b>
<i style="left:0;top:494px;width:36px;height:1px;background:#c7c7c7"></i>
<b class="rn" style="top:477px;height:17px;line-height:17px">20</b>
<i style="left:0;top:512px;width:36px;height:1px;background:#c7c7c7"></i>
<b class="rn" style="top:495px;height:17px;line-height:17px">21</b>
<i style="left:0;top:530px;width:36px;height:1px;background:#c7c7c7"></i>
<b class="rn" style="top:513px;height:17px;line-height:17px">22</b>
<i style="left:0;top:549px;width:36px;height:1px;background:#c7c7c7"></i>
<b class="rn" style="top:531px;height:18px;line-height:18px">23</b>
<i style="left:0;top:568px;width:36px;height:1px;background:#c7c7c7"></i>
<b class="rn" style="top:550px;height:18px;line-height:18px">24</b>
<i style="left:0;top:586px;width:36px;height:1px;background:#c7c7c7"></i>
<b class="rn" style="top:569px;height:17px;line-height:17px">25</b>
<i style="left:0;top:604px;width:36px;height:1px;background:#c7c7c7"></i>
<b class="rn" style="top:587px;height:17px;line-height:17px">26</b>
<i style="left:0;top:622px;width:36px;height:1px;background:#c7c7c7"></i>
<b class="rn" style="top:605px;height:17px;line-height:17px">27</b>
<i style="left:0;top:640px;width:36px;height:1px;background:#c7c7c7"></i>
<b class="rn" style="top:623px;height:17px;line-height:17px">28</b>
<i style="left:0;top:658px;width:36px;height:1px;background:#c7c7c7"></i>
<b class="rn" style="top:641px;height:17px;line-height:17px">29</b>
<i style="left:0;top:676px;width:36px;height:1px;background:#c7c7c7"></i>
<b class="rn" style="top:659px;height:17px;line-height:17px">30</b>
<i style="left:0;top:694px;width:36px;height:1px;background:#c7c7c7"></i>
<b class="rn" style="top:677px;height:17px;line-height:17px">31</b>
<i style="left:0;top:712px;width:36px;height:1px;background:#c7c7c7"></i>
<b class="rn" style="top:695px;height:17px;line-height:17px">32</b>
<i style="left:0;top:730px;width:36px;height:1px;background:#c7c7c7"></i>
<b class="rn" style="top:713px;height:17px;line-height:17px">33</b>
<i style="left:0;top:748px;width:36px;height:1px;background:#c7c7c7"></i>
<b class="rn" style="top:731px;height:17px;line-height:17px">34</b>
<i style="left:0;top:766px;width:36px;height:1px;background:#c7c7c7"></i>
<b class="rn" style="top:749px;height:17px;line-height:17px">35</b>
<i style="left:0;top:784px;width:36px;height:1px;background:#c7c7c7"></i>
<b class="rn" style="top:767px;height:17px;line-height:17px">36</b>
<i style="left:0;top:802px;width:36px;height:1px;background:#c7c7c7"></i>
<b class="rn" style="top:785px;height:17px;line-height:17px">37</b>
<i style="left:0;top:820px;width:36px;height:1px;background:#c7c7c7"></i>
<b class="rn" style="top:803px;height:17px;line-height:17px">38</b>
<i style="left:0;top:838px;width:36px;height:1px;background:#c7c7c7"></i>
<b class="rn" style="top:821px;height:17px;line-height:17px">39</b>
<i style="left:0;top:856px;width:36px;height:1px;background:#c7c7c7"></i>
<b class="rn" style="top:839px;height:17px;line-height:17px">40</b>
<i style="left:0;top:874px;width:36px;height:1px;background:#c7c7c7"></i>
<b class="rn" style="top:857px;height:17px;line-height:17px">41</b>
<i style="left:0;top:892px;width:36px;height:1px;background:#c7c7c7"></i>
<b class="rn" style="top:875px;height:17px;line-height:17px">42</b>
<i style="left:0;top:910px;width:36px;height:1px;background:#c7c7c7"></i>
<b class="rn" style="top:893px;height:17px;line-height:17px">43</b>
<i style="left:0;top:928px;width:36px;height:1px;background:#c7c7c7"></i>
<b class="rn" style="top:911px;height:17px;line-height:17px">44</b>
</div>
<div id="taskbar">
<i style="left:0px;top:969px;width:1919px;height:29px;background:#373737;"></i>
<i style="left:335px;top:969px;width:33px;height:29px;background:#5a5a5a;"></i>
<i style="left:370px;top:969px;width:1px;height:29px;background:#2e2e2e;"></i>
<i style="left:1915px;top:969px;width:1px;height:29px;background:#6a6a6a;"></i>
<i style="left:117px;top:996px;width:19.5px;height:2px;background:#8bb8e8;"></i>
<i style="left:138px;top:996px;width:6.5px;height:2px;background:#8bb8e8;"></i>
<i style="left:154px;top:996px;width:19.5px;height:2px;background:#8bb8e8;"></i>
<i style="left:175px;top:996px;width:6.5px;height:2px;background:#8bb8e8;"></i>
<i style="left:191px;top:996px;width:19.5px;height:2px;background:#8bb8e8;"></i>
<i style="left:212px;top:996px;width:6.5px;height:2px;background:#8bb8e8;"></i>
<i style="left:227.5px;top:996px;width:28.0px;height:2px;background:#8bb8e8;"></i>
<i style="left:265px;top:996px;width:28px;height:2px;background:#8bb8e8;"></i>
<i style="left:302px;top:996px;width:28px;height:2px;background:#8bb8e8;"></i>
<i style="left:335px;top:996px;width:35px;height:2px;background:#8bb8e8;"></i>
<i style="left:380px;top:996px;width:16px;height:2px;background:#8bb8e8;"></i>
<i style="left:398px;top:996px;width:6px;height:2px;background:#8bb8e8;"></i>
<svg viewBox="0 0 33 31" style="left:9.8px;top:976.0px;width:16.5px;height:15.5px"><path d="M0 4.200L13.500 2.400v12.300H0zM15.500 2.100L33 0v14.700H15.500zM0 16.600h13.500v12.200L0 27zM15.500 16.600H33V31l-17.500-2.200z" fill="#fff"/></svg>
<svg viewBox="0 0 36 34" style="left:47.5px;top:975.2px;width:18px;height:17px"><defs><linearGradient id="cp1" x1="0" y1="0" x2="1" y2="1"><stop offset="0" stop-color="#2a7fe8"/><stop offset=".5" stop-color="#8b5ad6"/><stop offset="1" stop-color="#e85aa0"/></linearGradient><linearGradient id="cp2" x1="0" y1="1" x2="1" y2="0"><stop offset="0" stop-color="#f0c23a"/><stop offset=".5" stop-color="#3ac07a"/><stop offset="1" stop-color="#2aa7e8"/></linearGradient></defs><path d="M14 2h10c3 0 4.500 2 5.300 4.500L34 22c1 3.500-1 6-4.500 6H24c-2.500 0-4-1.500-4.800-4L15 8c-.5-2-1.500-3-3.500-3z" fill="url(#cp1)"/><path d="M22 32H12c-3 0-4.500-2-5.300-4.500L2 12C1 8.500 3 6 6.500 6H12c2.500 0 4 1.500 4.800 4L21 26c.5 2 1.500 3 3.500 3z" fill="url(#cp2)"/></svg>
<svg viewBox="0 0 34 32" style="left:85.2px;top:975.7px;width:17px;height:16px"><rect x="8" y="0" width="26" height="32" rx="2.500" fill="#21a366"/><rect x="8" y="0" width="13" height="16" fill="#33c481"/><rect x="21" y="16" width="13" height="16" fill="#107c41"/><rect x="21" y="0" width="13" height="16" rx="0" fill="#21a366"/><rect x="8" y="16" width="13" height="16" fill="#185c37"/><rect x="0" y="7" width="18" height="18" rx="2" fill="#107c41"/><path d="M4.500 11h3l1.800 3.600L11.200 11h2.800l-3.200 5 3.300 5h-3L9.200 17.300 7.300 21H4.400l3.300-5z" fill="#fff"/></svg>
<svg viewBox="0 0 34 34" style="left:122.4px;top:975.2px;width:17px;height:17px"><defs><radialGradient id="ff1" cx=".7" cy=".2" r="1"><stop offset="0" stop-color="#ffe14a"/><stop offset=".35" stop-color="#ff9a1f"/><stop offset=".7" stop-color="#ff3d45"/><stop offset="1" stop-color="#c60084"/></radialGradient></defs><path d="M17 3c3-3 6-2 6-2-1 2 0 4 2 5 4 2.500 8 7 8 13 0 8.500-7 15-16 15S1 27.500 1 19c0-5 2-9 5-11 0 2 1 3 2 3 0-3 3-6 9-8z" fill="url(#ff1)"/><circle cx="16" cy="19" r="7" fill="#7542e5"/><path d="M9 19c0-4 3-7 7-7 2 0 3 .5 4 1.500-3-.5-5 1-5 3s2 3 4 3c-1 3-4 5-7 4-2-1-3-2.500-3-4.500z" fill="#ff8a16"/></svg>
<svg viewBox="0 0 34 34" style="left:159.5px;top:975.2px;width:17px;height:17px"><circle cx="16" cy="16" r="15" fill="#8000d7"/><path d="M5 13c0-2 2-3.500 5-3.500 3 0 4.500 1.500 6 1.500s3-1.500 6-1.500c3 0 5 1.500 5 3.500 0 4-2 7.500-5.500 7.500-3 0-4-2.500-5.500-2.500S13.500 20.500 10.500 20.500C7 20.500 5 17 5 13z" fill="#fff"/><circle cx="11" cy="14.500" r="2.500" fill="#8000d7"/><circle cx="21" cy="14.500" r="2.500" fill="#8000d7"/><circle cx="26" cy="26" r="6" fill="#ff7139"/><circle cx="26" cy="26.500" r="3" fill="#9059ff"/></svg>
<svg viewBox="0 0 32 34" style="left:197.3px;top:975.2px;width:16px;height:17px"><path d="M6 3h22l-2 28H2z" fill="#9ed0f0"/><path d="M8 5h19l-1.800 24H5z" fill="#c9e6f8"/><path d="M8 10h17M7.600 14h17M7.200 18h17M6.800 22h17M6.400 26h13" stroke="#6aa9d6" stroke-width="1.200"/><path d="M7 1v5M11 1v5M15 1v5M19 1v5M23 1v5M27 1v5" stroke="#5a6b7b" stroke-width="1.600"/></svg>
<svg viewBox="0 0 32 32" style="left:233.8px;top:975.7px;width:16px;height:16px"><circle cx="16" cy="16" r="15.500" fill="#2ea6de"/><path d="M6.500 15.800l16.800-6.700c.8-.3 1.500.2 1.200 1.400l-2.900 13.400c-.2 1-.8 1.200-1.600.8l-4.400-3.300-2.100 2.100c-.2.200-.4.400-.9.400l.3-4.500 8.200-7.400c.4-.3-.1-.5-.5-.2l-10.100 6.400-4.400-1.400c-.9-.3-1-.9.400-1z" fill="#fff"/></svg>
<svg viewBox="0 0 26 36" style="left:272.5px;top:974.7px;width:13px;height:18px"><rect x="0" y="0" width="26" height="36" rx="2" fill="#7a8794"/><rect x="3" y="3" width="20" height="7" fill="#35c0f0"/><g fill="#e8edf2"><rect x="3" y="13" width="5" height="4"/><rect x="10.500" y="13" width="5" height="4"/><rect x="18" y="13" width="5" height="4"/><rect x="3" y="20" width="5" height="4"/><rect x="10.500" y="20" width="5" height="4"/><rect x="3" y="27" width="5" height="5"/><rect x="10.500" y="27" width="5" height="5"/></g><rect x="18" y="20" width="5" height="12" fill="#1d4f91"/></svg>
<svg viewBox="0 0 32 28" style="left:307.5px;top:977.5px;width:16px;height:14px"><path d="M9 0l10 6 9-3-7 9-9-3z" fill="#2fc4b2"/><path d="M0 8c3 5 9 8 15 8 6 0 12-3 17-9-1 9-7 20-17 21C7 28 1 20 0 8z" fill="#1a56db"/><path d="M0 8c4 5 9 7 15 7l6 2c-3 4-8 6-12 4C4 19 1 14 0 8z" fill="#2f7df6"/></svg>
<svg viewBox="0 0 34 34" style="left:344.3px;top:975.2px;width:17px;height:17px"><circle cx="17" cy="17" r="16" fill="#fff"/><path d="M17 1a16 16 0 0 1 13.860 8H17a8 8 0 0 0-7.540 5.340L3.600 6.900A16 16 0 0 1 17 1z" fill="#ea4335"/><path d="M30.860 9A16 16 0 0 1 17 33l6.930-12A8 8 0 0 0 23.900 9z" fill="#fbbc04"/><path d="M17 33A16 16 0 0 1 3.140 9l6.930 12A8 8 0 0 0 17 25l6.930-4z" fill="#34a853"/><path d="M3.600 6.900l5.900 10.200A8 8 0 0 0 10.070 21L3.140 9z" fill="#34a853"/><circle cx="17" cy="17" r="7.300" fill="#fff"/><circle cx="17" cy="17" r="5.800" fill="#4285f4"/></svg>
<svg viewBox="0 0 34 34" style="left:381.5px;top:975.2px;width:17px;height:17px"><circle cx="17" cy="17" r="16" fill="#fff"/><path d="M17 1a16 16 0 0 1 13.860 8H17a8 8 0 0 0-7.540 5.340L3.600 6.900A16 16 0 0 1 17 1z" fill="#ea4335"/><path d="M30.860 9A16 16 0 0 1 17 33l6.930-12A8 8 0 0 0 23.900 9z" fill="#fbbc04"/><path d="M17 33A16 16 0 0 1 3.140 9l6.930 12A8 8 0 0 0 17 25l6.930-4z" fill="#34a853"/><path d="M3.600 6.900l5.900 10.200A8 8 0 0 0 10.070 21L3.140 9z" fill="#34a853"/><circle cx="17" cy="17" r="7.300" fill="#fff"/><circle cx="17" cy="17" r="5.800" fill="#4285f4"/><circle cx="26" cy="26" r="7" fill="#1e8e5a"/><rect x="22" y="23" width="8" height="6" rx="1" fill="#cfe9db"/></svg>
<svg viewBox="0 0 24 24" style="left:1760.500px;top:974.500px;width:19px;height:19px;fill:none;stroke:#fff;stroke-width:1.400"><path d="M5 15l7-7 7 7"/></svg>
<svg viewBox="0 0 24 24" style="left:1784.500px;top:974.500px;width:18.500px;height:18.500px;fill:none;stroke:#fff;stroke-width:1.300"><path d="M3 9.500h3.500L11 5.500v13l-4.500-4H3z"/><path d="M14 9.500c1.200 1.400 1.200 3.600 0 5M16.500 7c2.400 2.800 2.400 7.200 0 10M19 5c3.300 4 3.300 10 0 14"/></svg>
<span class="t" style="left:1816px;top:975.500px;font-size:12px;line-height:16px;color:#fff;letter-spacing:-.3px">7:40 AM</span>
<svg viewBox="0 0 24 24" style="left:1877.500px;top:974px;width:19px;height:19px;fill:none;stroke:#fff;stroke-width:1.400"><path d="M3 3h18v14h-6l-3 3-3-3H3z"/></svg>
</div>
</body></html>
